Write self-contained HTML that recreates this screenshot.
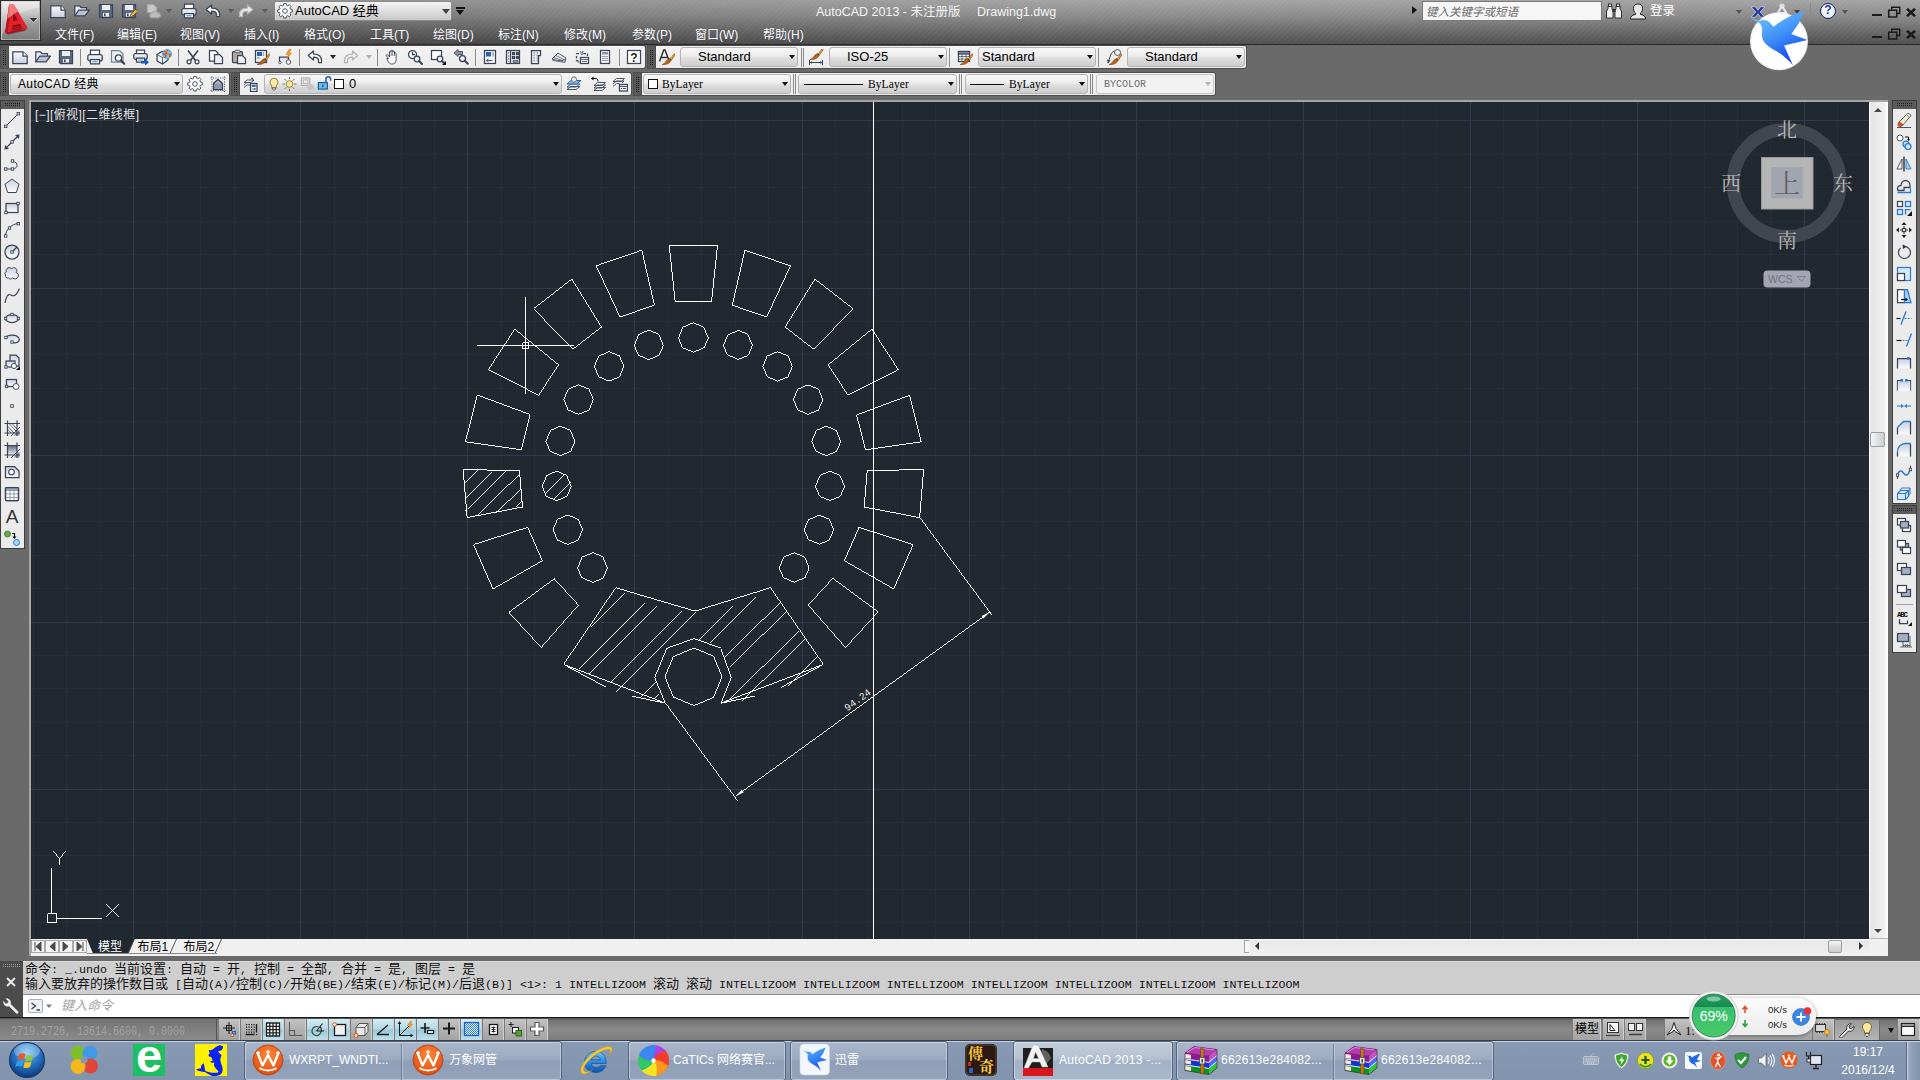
<!DOCTYPE html>
<html lang="zh-CN"><head><meta charset="utf-8"><title>AutoCAD 2013 - Drawing1.dwg</title>
<style>
*{box-sizing:border-box;margin:0;padding:0}
html,body{width:1920px;height:1080px;overflow:hidden}
body{background:#6a6a6a;font-family:"Liberation Sans","Noto Sans CJK SC",sans-serif;font-size:12px;color:#000;position:relative}
.abs{position:absolute}
svg{display:block}
#top{position:absolute;left:0;top:0;width:1920px;height:45px;background:linear-gradient(#a4a4a4 0,#8c8c8c 35%,#6a6a6a 70%,#505050 97%,#2a2a2a 98%,#2a2a2a 100%)}
#top:before{content:"";position:absolute;inset:0 0 1px 0;background:linear-gradient(90deg,rgba(0,0,0,.14) 0,rgba(0,0,0,.1) 25%,rgba(0,0,0,0) 55%),repeating-linear-gradient(135deg,rgba(255,255,255,.028) 0 1.5px,rgba(0,0,0,0) 1.5px 4px)}
.menu{position:absolute;top:27px;height:16px;line-height:16px;font-size:12px;color:#fff;white-space:nowrap;text-shadow:0 0 1px rgba(40,40,80,.6)}
.tbar{position:absolute;background:linear-gradient(#f3f3f3,#ebebeb);border-radius:0 2px 2px 0;box-shadow:0 0 0 1px #4e4e4e}
.grip{position:absolute;background:#565656}
.dd{position:absolute;height:20px;border:1px solid #b4b4b4;border-radius:3px;background:linear-gradient(#f8f8f8 0,#ececec 45%,#dedede 55%,#cecece 100%);font-size:13px;line-height:18px;white-space:nowrap;overflow:hidden}
.dd .arr{position:absolute;right:2px;top:7px;width:0;height:0;border:3.5px solid transparent;border-top:4.5px solid #111;border-bottom:0}
.sep{position:absolute;width:1px;background:#8a8a8a}
</style></head><body>
<div id="top">
<div class="abs" style="left:0;top:0;width:41px;height:41px;background:#2a2a2a"></div>
<div class="abs" style="left:1px;top:1px;width:39px;height:39px;border:1px solid #dcdcdc;border-bottom-color:#a8a8a8;border-right-color:#b4b4b4;border-left-color:#cfcfcf;background:linear-gradient(#e6e6e6 0,#c6c6c6 30%,#a0a0a0 55%,#7e7e7e 100%)"></div>
<svg class="abs" style="left:0;top:0" width="41" height="41" viewBox="0 0 41 41">
<defs><clipPath id="abc"><rect x="2" y="2" width="37" height="37"/></clipPath></defs>
<path d="M2 2h37v6C22 9 8 20 2 36z" fill="#fff" opacity=".28" clip-path="url(#abc)"/>
<path d="M6.500 33.500l2 1.300 16-3.800 3.500-2.300-3 .5-13 2.500z" fill="#30343c" opacity=".45"/>
<path d="M5.100 32.400l2.100 1.600 16.800-3.500 3.700-2.600-4.200 1.700-12 1.400z" fill="#a80c14"/>
<path d="M9.200 4h4.400l14.100 23.900-4.200 1.700-3-5.300-7.900 1-1.100 5.700-6.400 1.400z" fill="#e6202a"/>
<path d="M9.200 4L7.300 17.500 5.100 32.400l2.500-.5 2.600-17z" fill="#b8121a"/>
<path d="M12.800 10.500l5 9.800-4.800 1z" fill="#8e0c12"/>
<path d="M12.600 25.300l7.900-1 3 5.300-12 1.400z" fill="#b40e16"/><path d="M12.600 25.300l7.900-1 .5.900-8.500 1.100z" fill="#6a080e"/>
<path d="M9.200 4h4.400l4.300 7.300L7.300 19z" fill="#f8b0b0" opacity=".62"/>
<path d="M29.800 18.100h7.200l-3.600 4z" fill="#2c3440"/><path d="M29.800 18.100l3.600 4 3.600-4" fill="none" stroke="#e8e8e8" stroke-width=".7" opacity=".7" transform="translate(0 .8)"/>
</svg>
<svg class="abs" style="left:50px;top:3px" width="16" height="16" viewBox="0 0 16 16" stroke-width="1.25"><path d="M.8 2.800h10.200l4.200 4.200v7.500H.8z" fill="url(#lgp2)" stroke="#3a4456"/><path d="M11 2.800v4.200h4.200" fill="#fff" stroke="#3a4456"/></svg>
<svg class="abs" style="left:74px;top:3px" width="16" height="16" viewBox="0 0 16 16" stroke-width="1.25"><path d="M.8 12.800v-10h4.700l1.500 1.700h5.500v2.500" fill="#e9edf4" stroke="#3a4456"/><path d="M.8 12.800l4-5.800h10.700l-4.500 5.800z" fill="#b9c2d2" stroke="#3a4456"/></svg>
<svg class="abs" style="left:98px;top:3px" width="16" height="16" viewBox="0 0 16 16" stroke-width="1.25"><path d="M1.5 1.5h13v13h-12l-1-1z" fill="#5a6880" stroke="#3a4456"/><rect x="4" y="2" width="8" height="5" fill="#e9edf4"/><rect x="4.5" y="9.5" width="7" height="4.5" fill="#e9edf4" stroke="#3a4456" stroke-width=".6"/><rect x="6" y="10.5" width="1.6" height="2.6" fill="#3a4456"/></svg>
<svg class="abs" style="left:121px;top:3px" width="16" height="16" viewBox="0 0 16 16" stroke-width="1.25"><path d="M1.5 1.5h13v13h-12l-1-1z" fill="#5a6880" stroke="#3a4456"/><rect x="4" y="2" width="8" height="5" fill="#e9edf4"/><rect x="4.5" y="9.5" width="7" height="4.5" fill="#e9edf4" stroke="#3a4456" stroke-width=".6"/><rect x="6" y="10.5" width="1.6" height="2.6" fill="#3a4456"/><path d="M9 14l1-3 4.5-4.5 2 2L12 13z" fill="#f0b030" stroke="#6a4a10" stroke-width=".6"/><path d="M9 14l1-3 2 2z" fill="#fff" stroke="#333" stroke-width=".5"/></svg>
<svg class="abs" style="left:145px;top:3px" width="16" height="16" viewBox="0 0 16 16" stroke-width="1.25"><path d="M2.5 1.5h6l3 3v5h-9z" fill="#c9c9c9" stroke="#a8a8a8"/><path d="M6 14.5a2.5 2.5 0 0 1 1-4.5a3 3 0 0 1 5.5 0a2.3 2.3 0 0 1 1 4.5z" fill="#bdbdbd" stroke="#a5a5a5"/></svg>
<svg class="abs" style="left:181px;top:3px" width="16" height="16" viewBox="0 0 16 16" stroke-width="1.25"><path d="M3.500 6V1.200h9V6" fill="#fff" stroke="#3a4456"/><rect x=".8" y="5.500" width="14.400" height="6.500" rx="2" fill="url(#lgp2)" stroke="#3a4456"/><path d="M3.500 10.500h9v4.300h-9z" fill="#fff" stroke="#3a4456"/><path d="M5.500 12.700h5" stroke="#7fa6d6" stroke-width="1.600"/></svg>
<svg class="abs" style="left:205px;top:3px" width="16" height="16" viewBox="0 0 16 16" stroke-width="1.25"><path d="M1.200 6.500l5.300-4.500v3c5 0 8 2 8 6.500v2h-3v-2c0-2.500-2-3.500-5-3.500v3z" fill="#fff" stroke="#3a4456" stroke-linejoin="round"/></svg>
<svg class="abs" style="left:238px;top:3px" width="16" height="16" viewBox="0 0 16 16" stroke-width="1.25"><path d="M14.800 6.500l-5.300-4.500v3c-5 0-8 2-8 6.500v2h3v-2c0-2.500 2-3.500 5-3.500v3z" fill="#ececec" stroke="#b4b4b4" stroke-linejoin="round"/></svg>
<div class="abs" style="left:166px;top:9px;border:3px solid transparent;border-top:4px solid #5a5a5a;border-bottom:0"></div>
<div class="abs" style="left:228px;top:9px;border:3px solid transparent;border-top:4px solid #5a5a5a;border-bottom:0"></div>
<div class="abs" style="left:262px;top:9px;border:3px solid transparent;border-top:4px solid #5a5a5a;border-bottom:0"></div>
<div class="abs" style="left:274px;top:1px;width:178px;height:20px;border:1px solid #8a8a8a;border-radius:2px;background:linear-gradient(#f4f4f4,#dedede 50%,#c8c8c8);"></div>
<svg class="abs" style="left:277px;top:3px" width="16" height="16" viewBox="0 0 16 16" stroke-width="1.25"><g fill="#fff" stroke="#3a4456" stroke-width=".9"><path d="M6.800 1h2.400l.3 1.800 1.300.6 1.500-1.100 1.700 1.700-1.100 1.500.6 1.300 1.800.3v2.400l-1.800.3-.6 1.300 1.100 1.500-1.700 1.700-1.500-1.100-1.300.6-.3 1.800H6.800l-.3-1.800-1.300-.6-1.500 1.100L2 12.900l1.100-1.500-.6-1.300L.7 9.800V7.400l1.800-.3.6-1.300L2 4.300 3.700 2.600l1.500 1.100 1.300-.6z" transform="translate(0 -.600)"/><circle cx="8" cy="8" r="2.300"/></g></svg>
<div class="abs" style="left:295px;top:3px;font-size:13px;line-height:16px;color:#000;white-space:nowrap">AutoCAD 经典</div>
<div class="abs" style="left:442px;top:9px;border:4px solid transparent;border-top:5px solid #444;border-bottom:0"></div>
<div class="abs" style="left:456px;top:7px;width:9px;height:2px;background:#111"></div><div class="abs" style="left:456px;top:10px;border:4.500px solid transparent;border-top:5px solid #111;border-bottom:0"></div>
<div class="abs" style="left:816px;top:4px;font-size:12.500px;line-height:16px;color:#f4f4f4;white-space:pre">AutoCAD 2013 - 未注册版</div>
<div class="abs" style="left:977px;top:4px;font-size:12.500px;line-height:16px;color:#f4f4f4;white-space:pre">Drawing1.dwg</div>
<div class="abs" style="left:1412px;top:6px;border:4px solid transparent;border-left:5px solid #111;border-right:0"></div>
<div class="abs" style="left:1422px;top:1px;width:180px;height:20px;background:#f6f6f6;border:1px solid #7a7a7a;font-size:11.500px;line-height:20px;color:#6a6a6a;font-style:italic;padding-left:3px;white-space:nowrap">键入关键字或短语</div>
<svg class="abs" style="left:1605px;top:2px" width="18" height="18" viewBox="0 0 18 18"><g fill="#f0f0f0" stroke="#222" stroke-width=".9"><path d="M3 4h4v3l1 2v7H1.500V9l1.500-2zM11 4h4v3l1.500 2v7H10V9l1-2z"/><rect x="3.500" y="2" width="3" height="2.500"/><rect x="11.500" y="2" width="3" height="2.500"/></g><rect x="7.500" y="7" width="3" height="3" fill="#333"/></svg>
<svg class="abs" style="left:1629px;top:2px" width="18" height="18" viewBox="0 0 18 18"><path d="M1.500 17c0-3 2-4 5-4.500v-1.500c-1.500-1-2-2.500-2-4.500 0-3 1.500-4.500 4.500-4.500s4.500 1.500 4.500 4.500c0 2-.5 3.500-2 4.500v1.500c3 .5 5 1.500 5 4.500z" fill="#e8e8e8" stroke="#222" stroke-width="1"/></svg>
<div class="abs" style="left:1650px;top:3px;font-size:12.500px;line-height:16px;color:#fff">登录</div>
<div class="abs" style="left:1736px;top:10px;border:3px solid transparent;border-top:4px solid #555;border-bottom:0"></div>
<svg class="abs" style="left:1749px;top:4.500px" width="18" height="14" viewBox="0 0 18 16"><path d="M1 2h5l3 4 3-4h5l-5.500 6 5.500 6h-5l-3-4-3 4H1l5.500-6z" fill="#2a3a9a" stroke="#d8dcf4" stroke-width=".8"/></svg>
<svg class="abs" style="left:1772px;top:3px" width="20" height="18" viewBox="0 0 20 18"><path d="M2 16l8-13 8 13M6 10h8" fill="none" stroke="#e8e8f4" stroke-width="2"/><circle cx="10" cy="3" r="2" fill="none" stroke="#e8e8f4" stroke-width="1.200"/></svg>
<div class="abs" style="left:1794px;top:10px;border:3px solid transparent;border-top:4px solid #444;border-bottom:0"></div>
<div class="abs" style="left:1810px;top:3px;width:1px;height:17px;background:#8a8a8a"></div>
<div class="abs" style="left:1820px;top:3px;width:16px;height:16px;border-radius:8px;background:radial-gradient(circle at 45% 35%,#ffffff,#dfe4f2);border:1.500px solid #18245e;color:#2038b4;font-weight:bold;font-size:12px;line-height:13px;text-align:center">?</div>
<div class="abs" style="left:1842px;top:10px;border:3px solid transparent;border-top:4px solid #555;border-bottom:0"></div>
<div class="abs" style="left:1872px;top:14px;width:10px;height:2px;background:#1a1a1a"></div><svg class="abs" style="left:1887px;top:6px" width="14" height="12" viewBox="0 0 14 12"><path d="M4.700 3.500v-2.300h8v6.300h-2.500" fill="none" stroke="#1a1a1a" stroke-width="1.500"/><rect x="1.700" y="4.200" width="8" height="6.800" fill="none" stroke="#1a1a1a" stroke-width="1.500"/></svg><svg class="abs" style="left:1906px;top:8px" width="10" height="9" viewBox="0 0 10 9"><path d="M1 .8l8 7.400M9 .8l-8 7.400" stroke="#1a1a1a" stroke-width="2.500"/></svg>
<div class="abs" style="left:1872px;top:36px;width:10px;height:2px;background:#1a1a1a"></div><svg class="abs" style="left:1887px;top:28px" width="14" height="12" viewBox="0 0 14 12"><path d="M4.700 3.500v-2.300h8v6.300h-2.500" fill="none" stroke="#1a1a1a" stroke-width="1.500"/><rect x="1.700" y="4.200" width="8" height="6.800" fill="none" stroke="#1a1a1a" stroke-width="1.500"/></svg><svg class="abs" style="left:1906px;top:30px" width="10" height="9" viewBox="0 0 10 9"><path d="M1 .8l8 7.400M9 .8l-8 7.400" stroke="#1a1a1a" stroke-width="2.500"/></svg>
<div class="menu" style="left:55px">文件(F)</div>
<div class="menu" style="left:117px">编辑(E)</div>
<div class="menu" style="left:180px">视图(V)</div>
<div class="menu" style="left:244px">插入(I)</div>
<div class="menu" style="left:304px">格式(O)</div>
<div class="menu" style="left:370px">工具(T)</div>
<div class="menu" style="left:433px">绘图(D)</div>
<div class="menu" style="left:498px">标注(N)</div>
<div class="menu" style="left:564px">修改(M)</div>
<div class="menu" style="left:632px">参数(P)</div>
<div class="menu" style="left:695px">窗口(W)</div>
<div class="menu" style="left:763px">帮助(H)</div>
</div>
<svg class="abs" style="left:1740px;top:0px;z-index:50" width="80" height="76" viewBox="1740 0 80 76">
<defs><linearGradient id="tb" x1=".2" y1="0" x2=".7" y2="1"><stop offset="0" stop-color="#6fc6ff"/><stop offset=".5" stop-color="#3e8ef8"/><stop offset="1" stop-color="#0a3cf4"/></linearGradient>
<radialGradient id="tw" cx=".5" cy=".5" r=".5"><stop offset=".93" stop-color="#fff"/><stop offset="1" stop-color="#e6e9ee"/></radialGradient></defs>
<circle cx="1779" cy="41.200" r="29" fill="url(#tw)"/>
<path d="M1750.400 18.200L1760.100 20.800C1763 19.500 1766 20 1768.500 21.500L1773.700 26.700C1782 20 1793 14 1804.200 11.100C1802 16 1800 20 1799 22.900L1791.400 34L1807.400 40.100L1784.100 45.500L1792.800 64.900C1788 60 1784 56 1778.900 52.800C1774 50 1771 48.500 1767.800 45.800C1765 43 1763 41 1762.600 38.900C1761.500 35 1762 32 1762.200 29.200C1762 27 1761 25 1760.100 23.600Z" fill="url(#tb)"/>
</svg><svg class="abs" style="left:1px;top:46px;background:#585858;box-shadow:0 0 0 1px #4e4e4e" width="8" height="22" shape-rendering="crispEdges"><rect x="2" y="4" width="1" height="1" fill="#1e1e1e"/><rect x="4" y="4" width="1" height="1" fill="#1e1e1e"/><rect x="2" y="6" width="1" height="1" fill="#1e1e1e"/><rect x="4" y="6" width="1" height="1" fill="#1e1e1e"/><rect x="2" y="8" width="1" height="1" fill="#1e1e1e"/><rect x="4" y="8" width="1" height="1" fill="#1e1e1e"/><rect x="2" y="10" width="1" height="1" fill="#1e1e1e"/><rect x="4" y="10" width="1" height="1" fill="#1e1e1e"/><rect x="2" y="12" width="1" height="1" fill="#1e1e1e"/><rect x="4" y="12" width="1" height="1" fill="#1e1e1e"/><rect x="2" y="14" width="1" height="1" fill="#1e1e1e"/><rect x="4" y="14" width="1" height="1" fill="#1e1e1e"/><rect x="2" y="16" width="1" height="1" fill="#1e1e1e"/><rect x="4" y="16" width="1" height="1" fill="#1e1e1e"/><rect x="2" y="18" width="1" height="1" fill="#1e1e1e"/><rect x="4" y="18" width="1" height="1" fill="#1e1e1e"/></svg>
<div class="tbar" style="left:9px;top:46px;width:636px;height:22px"></div>
<svg class="abs" style="left:12px;top:49px" width="16" height="16" viewBox="0 0 16 16" stroke-width="1.25"><path d="M.8 2.800h10.200l4.200 4.200v7.500H.8z" fill="url(#lgp2)" stroke="#3a4456"/><path d="M11 2.800v4.200h4.200" fill="#fff" stroke="#3a4456"/></svg>
<svg class="abs" style="left:35px;top:49px" width="16" height="16" viewBox="0 0 16 16" stroke-width="1.25"><path d="M.8 12.800v-10h4.700l1.500 1.700h5.500v2.500" fill="#e9edf4" stroke="#3a4456"/><path d="M.8 12.800l4-5.800h10.700l-4.500 5.800z" fill="#b9c2d2" stroke="#3a4456"/></svg>
<svg class="abs" style="left:58px;top:49px" width="16" height="16" viewBox="0 0 16 16" stroke-width="1.25"><path d="M1.5 1.5h13v13h-12l-1-1z" fill="#5a6880" stroke="#3a4456"/><rect x="4" y="2" width="8" height="5" fill="#e9edf4"/><rect x="4.5" y="9.5" width="7" height="4.5" fill="#e9edf4" stroke="#3a4456" stroke-width=".6"/><rect x="6" y="10.5" width="1.6" height="2.6" fill="#3a4456"/></svg>
<div class="sep" style="left:80px;top:49px;height:17px"></div>
<svg class="abs" style="left:87px;top:49px" width="16" height="16" viewBox="0 0 16 16" stroke-width="1.25"><path d="M3.500 6V1.200h9V6" fill="#fff" stroke="#3a4456"/><rect x=".8" y="5.500" width="14.400" height="6.500" rx="2" fill="url(#lgp2)" stroke="#3a4456"/><path d="M3.500 10.500h9v4.300h-9z" fill="#fff" stroke="#3a4456"/><path d="M5.500 12.700h5" stroke="#7fa6d6" stroke-width="1.600"/></svg>
<svg class="abs" style="left:110px;top:49px" width="16" height="16" viewBox="0 0 16 16" stroke-width="1.25"><path d="M1.500 1.500h8l3.500 3.500v8h-11.500z" fill="#e9edf4" stroke="#7a8396"/><circle cx="8.500" cy="9" r="3.200" fill="#eef5fb" stroke="#3a4456"/><path d="M11 11.500l3.200 3.200" stroke="#3a4456" stroke-width="2.200" stroke-linecap="round"/></svg>
<svg class="abs" style="left:133px;top:49px" width="16" height="16" viewBox="0 0 16 16" stroke-width="1.25"><path d="M3.500 5V1.200h8V5" fill="#fff" stroke="#3a4456"/><rect x=".8" y="4.500" width="13.400" height="6" rx="2" fill="url(#lgp2)" stroke="#3a4456"/><path d="M3.500 9h8v4h-8z" fill="#fff" stroke="#3a4456"/><path d="M5 11h5" stroke="#8aa0c0" stroke-width="1.200"/><path d="M8 12h4v-2.200l4 3.400-4 3.400V14.400H8z" fill="#1458c0" stroke="none"/></svg>
<svg class="abs" style="left:156px;top:49px" width="16" height="16" viewBox="0 0 16 16" stroke-width="1.25"><path d="M1 5.500l5-3 6 2v6.500l-5.500 4-5.500-3z" fill="#eef0f4" stroke="#3a4456"/><path d="M6.500 8.500v6.500M1 5.500l5.500 3 5.500-4" fill="none" stroke="#3a4456" stroke-width=".8"/><circle cx="11" cy="5" r="4.600" fill="#5cc4f4" stroke="#2a98e0" stroke-width=".6"/><path d="M7.500 2.500c2.500 0 5.500 2.500 6.500 5.500M9.500 9c-.5-3 1-6.500 2.500-8M6.800 5.500c2.500-1 6-1 8.500.5" fill="none" stroke="#e8402a" stroke-width="1.100"/><path d="M10 1.500c2 1.500 3 4.500 2 7.500" fill="none" stroke="#f4c020" stroke-width="1"/></svg>
<div class="sep" style="left:178px;top:49px;height:17px"></div>
<svg class="abs" style="left:185px;top:49px" width="16" height="16" viewBox="0 0 16 16" stroke-width="1.25"><path d="M3 1.5l7.500 10M13 1.500l-7.500 10" stroke="#3a4456" stroke-width="1.600" fill="none"/><circle cx="4" cy="12.800" r="2" fill="#fff" stroke="#3a4456" stroke-width="1.200"/><circle cx="12" cy="12.800" r="2" fill="#fff" stroke="#3a4456" stroke-width="1.200"/></svg>
<svg class="abs" style="left:208px;top:49px" width="16" height="16" viewBox="0 0 16 16" stroke-width="1.25"><path d="M1.500 1.500h6l2.500 2.500v8h-8.500z" fill="#fff" stroke="#3a4456"/><path d="M6.500 5.500h5l3 3v6h-8z" fill="#e9edf4" stroke="#3a4456"/></svg>
<svg class="abs" style="left:231px;top:49px" width="16" height="16" viewBox="0 0 16 16" stroke-width="1.25"><rect x="1.500" y="2.500" width="10" height="11" rx="1" fill="#b8ad9c" stroke="#3a4456"/><rect x="4" y="1.200" width="5" height="2.600" rx=".8" fill="#d8d8d8" stroke="#3a4456" stroke-width=".8"/><path d="M6.500 6.500h5l3 3v5h-8z" fill="#e9edf4" stroke="#3a4456"/></svg>
<svg class="abs" style="left:254px;top:49px" width="16" height="16" viewBox="0 0 16 16" stroke-width="1.25"><rect x="1.500" y="1.500" width="11" height="12" fill="#f4f6fa" stroke="#3a4456"/><rect x="3" y="3" width="5" height="4" fill="#2a62b0" stroke="none"/><path d="M9.500 3v4M3 9h3" stroke="#98a4b8" stroke-width="1.400"/><path d="M3 15.600C5 15.800 8 15.600 10 14C11.500 12.800 12.300 11.800 11.800 10.800L10.400 9.800C9 9.800 8 10.800 7.300 12C6.300 13.600 4.500 15 3 15.600Z" fill="#b4641c" stroke="#6e3206" stroke-width=".5"/><path d="M11 10.300L15 4.800L16.200 5.700L12.300 11.300Z" fill="#f2a62c" stroke="#8a3a08" stroke-width=".6"/><path d="M10.400 9.800l1.400 1" stroke="#5a2804" stroke-width="1"/></svg>
<svg class="abs" style="left:277px;top:49px" width="16" height="16" viewBox="0 0 16 16" stroke-width="1.25"><path d="M2.500 13v-5h9v5" fill="#e9edf4" stroke="#3a4456"/><circle cx="3" cy="13.500" r="1.300" fill="#fff" stroke="#3a4456" stroke-width=".8"/><circle cx="11.500" cy="13" r="2.300" fill="#f4f4f4" stroke="#3a4456" stroke-width=".8"/><path d="M12 .5l-3 5h2.500l-1.500 4 4.500-5.500h-2.500l2-3.500z" fill="#f8a020" stroke="#d06000" stroke-width=".5"/></svg>
<div class="sep" style="left:299px;top:49px;height:17px"></div>
<svg class="abs" style="left:307px;top:49px" width="16" height="16" viewBox="0 0 16 16" stroke-width="1.25"><path d="M1.200 6.500l5.300-4.500v3c5 0 8 2 8 6.500v2h-3v-2c0-2.500-2-3.500-5-3.500v3z" fill="#fff" stroke="#3a4456" stroke-linejoin="round"/></svg>
<div class="abs" style="left:330px;top:55px;border:3px solid transparent;border-top:4px solid #222;border-bottom:0"></div>
<svg class="abs" style="left:343px;top:49px" width="16" height="16" viewBox="0 0 16 16" stroke-width="1.25"><path d="M14.800 6.500l-5.300-4.500v3c-5 0-8 2-8 6.500v2h3v-2c0-2.500 2-3.500 5-3.500v3z" fill="#ececec" stroke="#b4b4b4" stroke-linejoin="round"/></svg>
<div class="abs" style="left:366px;top:55px;border:3px solid transparent;border-top:4px solid #b0b0b0;border-bottom:0"></div>
<div class="sep" style="left:377px;top:49px;height:17px"></div>
<svg class="abs" style="left:384px;top:49px" width="16" height="16" viewBox="0 0 16 16" stroke-width="1.25"><path d="M4.500 9.500l-2-2.500c-.8-1 .5-2 1.300-1l1.700 2v-5c0-1.200 1.600-1.200 1.600 0v-1c0-1.200 1.700-1.200 1.700 0v1c0-1.200 1.700-1.200 1.700 0v1.500c0-1.100 1.600-1.100 1.600 0v6c0 3-1.500 4.500-4 4.500s-3.500-1-5.200-5.500z" fill="#fff" stroke="#3a4456" stroke-width=".9" stroke-linejoin="round"/><path d="M7.100 3v4M8.800 2.500v4.500M10.500 3.500v3.500" stroke="#3a4456" stroke-width=".7"/></svg>
<svg class="abs" style="left:407px;top:49px" width="16" height="16" viewBox="0 0 16 16" stroke-width="1.25"><circle cx="5.500" cy="5.500" r="4" fill="#f2f6fa" stroke="#3a4456"/><path d="M5.500 3v2.500h2.500" fill="none" stroke="#3a4456"/><circle cx="10" cy="10" r="2.800" fill="#e8f0f8" stroke="#3a4456"/><path d="M12 12l3 3" stroke="#3a4456" stroke-width="2" stroke-linecap="round"/></svg>
<svg class="abs" style="left:430px;top:49px" width="16" height="16" viewBox="0 0 16 16" stroke-width="1.25"><rect x="1.500" y="1.500" width="10" height="9" fill="#fff" stroke="#3a4456"/><circle cx="10" cy="10" r="2.800" fill="#e8f0f8" stroke="#3a4456"/><path d="M12 12l2.500 2.500" stroke="#3a4456" stroke-width="2" stroke-linecap="round"/><path d="M16 12v4h-4z" fill="#111"/></svg>
<svg class="abs" style="left:453px;top:49px" width="16" height="16" viewBox="0 0 16 16" stroke-width="1.25"><path d="M1 4l4-3.500v2h4.500v3H5v2z" fill="#8a94a8" stroke="#3a4456" stroke-width=".8"/><circle cx="9.500" cy="9.500" r="3" fill="#e8f0f8" stroke="#3a4456"/><path d="M11.800 11.800l3 3" stroke="#3a4456" stroke-width="2" stroke-linecap="round"/></svg>
<div class="sep" style="left:475px;top:49px;height:17px"></div>
<svg class="abs" style="left:482px;top:49px" width="16" height="16" viewBox="0 0 16 16" stroke-width="1.25"><rect x="2.500" y="1.500" width="11" height="13" fill="#f6f8fb" stroke="#3a4456"/><rect x="4" y="3" width="5" height="4.500" fill="#2a62b0"/><path d="M11 3v4.500" stroke="#98a4b8" stroke-width="1.500"/><path d="M4.500 11.500h6M4.500 11.500l2-1.500M4.500 11.500l2 1.500" stroke="#3a4456" stroke-width=".9" fill="none"/></svg>
<svg class="abs" style="left:505px;top:49px" width="16" height="16" viewBox="0 0 16 16" stroke-width="1.25"><rect x="1.500" y="1.500" width="13" height="13" fill="#f6f8fb" stroke="#3a4456"/><path d="M5.500 1.500v13" stroke="#3a4456"/><path d="M3.500 3.500v1M3.500 6.500v1M3.500 9.500v1M3.500 12.500v.500" stroke="#3a4456" stroke-width="1.200"/><rect x="7.500" y="3.500" width="2" height="2" fill="none" stroke="#3a4456"/><rect x="11.500" y="3.500" width="2" height="2" fill="none" stroke="#3a4456"/><rect x="7.500" y="7.500" width="2" height="2" fill="none" stroke="#3a4456"/><rect x="11.500" y="7.500" width="2" height="2" fill="none" stroke="#3a4456"/><rect x="8" y="11.500" width="5" height="2" fill="#8a94a8" stroke="#3a4456" stroke-width=".6"/></svg>
<svg class="abs" style="left:528px;top:49px" width="16" height="16" viewBox="0 0 16 16" stroke-width="1.25"><path d="M3.500 14.500v-13h9v5h-2v8z" fill="#f0f2f6" stroke="#3a4456"/><path d="M5.500 4h1.500M8.500 4h1.500M5.500 6.500h1.500M8.500 6.500h1.500M5.500 9h1.500M8.500 9h1.500M5.500 11.500h1.500M8.500 11.500h1.500" stroke="#8a94a8" stroke-width="1.600"/></svg>
<svg class="abs" style="left:551px;top:49px" width="16" height="16" viewBox="0 0 16 16" stroke-width="1.25"><path d="M1 10l6-6 8 5-1 2.500c-1-.8-2-.5-2.500.500l-9.500-1.500z" fill="#f0f2f6" stroke="#3a4456" stroke-width=".9"/><path d="M1.500 11.500l10 1.500M3 8.500l8.500 3M5 6.500l8 4" stroke="#3a4456" stroke-width=".7" fill="none"/><circle cx="13" cy="12" r="1.500" fill="#c8ccd4" stroke="#3a4456" stroke-width=".7"/></svg>
<svg class="abs" style="left:574px;top:49px" width="16" height="16" viewBox="0 0 16 16" stroke-width="1.25"><path d="M2.500 4.500h3M9.500 4.500h4v3M2.500 7v4.500h3M2.500 4.500v.8" stroke="#3a4456" fill="none" stroke-dasharray="2.500 1.500"/><path d="M6 2.500c1 0 1.500 1 1 1.500s0 1.500 1 1.500c1.500 0 1-1.500.500-2s0-1.500 1-1" fill="#dfe3ea" stroke="#3a4456" stroke-width=".8"/><rect x="6.500" y="8.500" width="8" height="6" fill="#fff" stroke="#3a4456"/><path d="M6.500 10.500h8M8 12.500h5" stroke="#3a4456" stroke-width=".8"/><rect x="3.500" y="12.500" width="2" height="1" fill="#3a4456"/></svg>
<svg class="abs" style="left:597px;top:49px" width="16" height="16" viewBox="0 0 16 16" stroke-width="1.25"><rect x="3.500" y="1.500" width="9" height="13" fill="#f6f8fb" stroke="#3a4456"/><rect x="5" y="3" width="6" height="2.500" fill="#8a94a8"/><path d="M5.500 7.500h1M7.500 7.500h1M9.500 7.500h1M5.500 9.500h1M7.500 9.500h1M9.500 9.500h1M5.500 11.500h1M7.500 11.500h1M9.500 11.500h1" stroke="#3a4456" stroke-width="1.200"/></svg>
<div class="sep" style="left:619px;top:49px;height:17px"></div>
<svg class="abs" style="left:626px;top:49px" width="16" height="16" viewBox="0 0 16 16" stroke-width="1.25"><rect x="1.500" y="1.500" width="13" height="13" fill="#fff" stroke="#3a4456"/><text x="8" y="12.500" text-anchor="middle" font-family="Liberation Sans,sans-serif" font-weight="bold" font-size="12" fill="#222">?</text></svg>
<svg class="abs" style="left:648px;top:46px;background:#585858;box-shadow:0 0 0 1px #4e4e4e" width="8" height="22" shape-rendering="crispEdges"><rect x="2" y="4" width="1" height="1" fill="#1e1e1e"/><rect x="4" y="4" width="1" height="1" fill="#1e1e1e"/><rect x="2" y="6" width="1" height="1" fill="#1e1e1e"/><rect x="4" y="6" width="1" height="1" fill="#1e1e1e"/><rect x="2" y="8" width="1" height="1" fill="#1e1e1e"/><rect x="4" y="8" width="1" height="1" fill="#1e1e1e"/><rect x="2" y="10" width="1" height="1" fill="#1e1e1e"/><rect x="4" y="10" width="1" height="1" fill="#1e1e1e"/><rect x="2" y="12" width="1" height="1" fill="#1e1e1e"/><rect x="4" y="12" width="1" height="1" fill="#1e1e1e"/><rect x="2" y="14" width="1" height="1" fill="#1e1e1e"/><rect x="4" y="14" width="1" height="1" fill="#1e1e1e"/><rect x="2" y="16" width="1" height="1" fill="#1e1e1e"/><rect x="4" y="16" width="1" height="1" fill="#1e1e1e"/><rect x="2" y="18" width="1" height="1" fill="#1e1e1e"/><rect x="4" y="18" width="1" height="1" fill="#1e1e1e"/></svg>
<div class="tbar" style="left:656px;top:46px;width:590px;height:22px"></div>
<svg class="abs" style="left:659px;top:49px" width="16" height="16" viewBox="0 0 16 16" stroke-width="1.25"><path d="M.5 12.500l4.200-11.500h1.300l4.500 11.500M2.200 8.500h6.500" fill="none" stroke="#333" stroke-width="1.500"/><path d="M3 15.600C5 15.800 8 15.600 10 14C11.500 12.800 12.300 11.800 11.800 10.800L10.400 9.800C9 9.800 8 10.800 7.300 12C6.300 13.600 4.500 15 3 15.600Z" fill="#b4641c" stroke="#6e3206" stroke-width=".5"/><path d="M11 10.300L15 4.800L16.200 5.700L12.300 11.300Z" fill="#f2a62c" stroke="#8a3a08" stroke-width=".6"/><path d="M10.400 9.800l1.400 1" stroke="#5a2804" stroke-width="1"/></svg>
<div class="dd" style="left:680px;top:47px;width:118px;height:20px;"><span style="position:absolute;left:17px">Standard</span><i class="arr"></i></div>
<div class="sep" style="left:801px;top:48px;height:19px"></div><div class="sep" style="left:803px;top:48px;height:19px"></div>
<svg class="abs" style="left:808px;top:49px" width="16" height="16" viewBox="0 0 16 16" stroke-width="1.25"><path d="M1.500 11v5M14.500 11v5M1.500 13.500h13" stroke="#3a4456" stroke-width="1" fill="none"/><path d="M1.500 13.500l2.500-1.200v2.400zM14.500 13.500l-2.500-1.200v2.400z" fill="#3a4456"/><g transform="translate(-1 -5)"><path d="M3 15.600C5 15.800 8 15.600 10 14C11.500 12.800 12.300 11.800 11.800 10.800L10.400 9.800C9 9.800 8 10.800 7.300 12C6.300 13.600 4.500 15 3 15.600Z" fill="#b4641c" stroke="#6e3206" stroke-width=".5"/><path d="M11 10.300L15 4.800L16.200 5.700L12.300 11.300Z" fill="#f2a62c" stroke="#8a3a08" stroke-width=".6"/><path d="M10.400 9.800l1.400 1" stroke="#5a2804" stroke-width="1"/></g></svg>
<div class="dd" style="left:829px;top:47px;width:118px;height:20px;"><span style="position:absolute;left:17px">ISO-25</span><i class="arr"></i></div>
<div class="sep" style="left:949px;top:48px;height:19px"></div>
<svg class="abs" style="left:957px;top:49px" width="16" height="16" viewBox="0 0 16 16" stroke-width="1.25"><rect x="1.500" y="2.500" width="11" height="10" fill="#fff" stroke="#3a4456"/><rect x="1.500" y="2.500" width="11" height="2.500" fill="#8a94a8" stroke="#3a4456"/><path d="M1.500 7.500h11M1.500 10h11M5 5v7.500M9 5v7.500" stroke="#3a4456" stroke-width=".7"/><path d="M3 15.600C5 15.800 8 15.600 10 14C11.500 12.800 12.300 11.800 11.800 10.800L10.400 9.800C9 9.800 8 10.800 7.300 12C6.300 13.600 4.500 15 3 15.600Z" fill="#b4641c" stroke="#6e3206" stroke-width=".5"/><path d="M11 10.300L15 4.800L16.200 5.700L12.300 11.300Z" fill="#f2a62c" stroke="#8a3a08" stroke-width=".6"/><path d="M10.400 9.800l1.400 1" stroke="#5a2804" stroke-width="1"/></svg>
<div class="dd" style="left:978px;top:47px;width:118px;height:20px;"><span style="position:absolute;left:3px">Standard</span><i class="arr"></i></div>
<div class="sep" style="left:1098px;top:48px;height:19px"></div>
<svg class="abs" style="left:1106px;top:49px" width="16" height="16" viewBox="0 0 16 16" stroke-width="1.25"><path d="M2 14l3-9c1-2 3-3 5-3" fill="none" stroke="#3a4456" stroke-width="1"/><path d="M1 10.500l1 4 2.500-3z" fill="#3a4456"/><circle cx="11.500" cy="3.500" r="3" fill="#f4f4f4" stroke="#3a4456" stroke-width=".9"/><path d="M3 15.600C5 15.800 8 15.600 10 14C11.500 12.800 12.300 11.800 11.800 10.800L10.400 9.800C9 9.800 8 10.800 7.300 12C6.300 13.600 4.500 15 3 15.600Z" fill="#b4641c" stroke="#6e3206" stroke-width=".5"/><path d="M11 10.300L15 4.800L16.200 5.700L12.300 11.300Z" fill="#f2a62c" stroke="#8a3a08" stroke-width=".6"/><path d="M10.400 9.800l1.400 1" stroke="#5a2804" stroke-width="1"/></svg>
<div class="dd" style="left:1127px;top:47px;width:118px;height:20px;"><span style="position:absolute;left:17px">Standard</span><i class="arr"></i></div>
<svg class="abs" style="left:1px;top:73px;background:#585858;box-shadow:0 0 0 1px #4e4e4e" width="8" height="22" shape-rendering="crispEdges"><rect x="2" y="4" width="1" height="1" fill="#1e1e1e"/><rect x="4" y="4" width="1" height="1" fill="#1e1e1e"/><rect x="2" y="6" width="1" height="1" fill="#1e1e1e"/><rect x="4" y="6" width="1" height="1" fill="#1e1e1e"/><rect x="2" y="8" width="1" height="1" fill="#1e1e1e"/><rect x="4" y="8" width="1" height="1" fill="#1e1e1e"/><rect x="2" y="10" width="1" height="1" fill="#1e1e1e"/><rect x="4" y="10" width="1" height="1" fill="#1e1e1e"/><rect x="2" y="12" width="1" height="1" fill="#1e1e1e"/><rect x="4" y="12" width="1" height="1" fill="#1e1e1e"/><rect x="2" y="14" width="1" height="1" fill="#1e1e1e"/><rect x="4" y="14" width="1" height="1" fill="#1e1e1e"/><rect x="2" y="16" width="1" height="1" fill="#1e1e1e"/><rect x="4" y="16" width="1" height="1" fill="#1e1e1e"/><rect x="2" y="18" width="1" height="1" fill="#1e1e1e"/><rect x="4" y="18" width="1" height="1" fill="#1e1e1e"/></svg>
<div class="tbar" style="left:9px;top:73px;width:220px;height:22px"></div>
<div class="dd" style="left:10px;top:74px;width:173px;height:20px;"><span style="position:absolute;left:7px;font-size:12px;letter-spacing:.35px">AutoCAD 经典</span><i class="arr"></i></div>
<svg class="abs" style="left:187px;top:76px" width="16" height="16" viewBox="0 0 16 16" stroke-width="1.25"><g fill="#fff" stroke="#3a4456" stroke-width=".9"><path d="M6.800 1h2.400l.3 1.800 1.300.6 1.500-1.100 1.700 1.700-1.100 1.500.6 1.300 1.800.3v2.400l-1.800.3-.6 1.300 1.100 1.500-1.700 1.700-1.500-1.100-1.300.6-.3 1.800H6.800l-.3-1.800-1.300-.6-1.500 1.100L2 12.900l1.100-1.500-.6-1.300L.7 9.800V7.400l1.800-.3.6-1.300L2 4.300 3.700 2.600l1.500 1.100 1.300-.6z" transform="translate(0 -.600)"/><circle cx="8" cy="8" r="2.300"/></g></svg>
<svg class="abs" style="left:210px;top:76px" width="16" height="16" viewBox="0 0 16 16" stroke-width="1.25"><path d="M.5 2h15M.5 14.500h15M2 .5v15.500M14.500 .5v15.500" fill="none" stroke="#5a6a88" stroke-width="1" stroke-dasharray="1.200 1.200"/><path d="M3.500 13.500V7.500L8 3.500l4.500 4v6z" fill="#8e98ac" stroke="#3a4456"/><path d="M3.500 7.500L8 3.500l4.500 4" fill="#b4bccb" stroke="#3a4456"/></svg>
<svg class="abs" style="left:232px;top:73px;background:#585858;box-shadow:0 0 0 1px #4e4e4e" width="8" height="22" shape-rendering="crispEdges"><rect x="2" y="4" width="1" height="1" fill="#1e1e1e"/><rect x="4" y="4" width="1" height="1" fill="#1e1e1e"/><rect x="2" y="6" width="1" height="1" fill="#1e1e1e"/><rect x="4" y="6" width="1" height="1" fill="#1e1e1e"/><rect x="2" y="8" width="1" height="1" fill="#1e1e1e"/><rect x="4" y="8" width="1" height="1" fill="#1e1e1e"/><rect x="2" y="10" width="1" height="1" fill="#1e1e1e"/><rect x="4" y="10" width="1" height="1" fill="#1e1e1e"/><rect x="2" y="12" width="1" height="1" fill="#1e1e1e"/><rect x="4" y="12" width="1" height="1" fill="#1e1e1e"/><rect x="2" y="14" width="1" height="1" fill="#1e1e1e"/><rect x="4" y="14" width="1" height="1" fill="#1e1e1e"/><rect x="2" y="16" width="1" height="1" fill="#1e1e1e"/><rect x="4" y="16" width="1" height="1" fill="#1e1e1e"/><rect x="2" y="18" width="1" height="1" fill="#1e1e1e"/><rect x="4" y="18" width="1" height="1" fill="#1e1e1e"/></svg>
<div class="tbar" style="left:240px;top:73px;width:391px;height:22px"></div>
<svg class="abs" style="left:243px;top:76px" width="16" height="16" viewBox="0 0 16 16" stroke-width="1.25"><path d="M1 6.500l3-2.500h7l-3 2.500zM1 9l3-2.500h3M1 11.500l3-2.500h3" fill="#f4f6fa" stroke="#3a4456" stroke-width=".9"/><path d="M8 3.500l1.500-1.500M9.500 2l.3 1.600M9.500 2l-1.600.2" stroke="#3a4456" stroke-width=".8" fill="none"/><rect x="7.500" y="7.500" width="6.500" height="8" fill="#f4f6fa" stroke="#3a4456"/><rect x="8.800" y="8.800" width="4" height="2" fill="#2a62b0"/><path d="M9 13h3.500M11.500 12l1 1-1 1" stroke="#3a4456" stroke-width=".8" fill="none"/></svg>
<div class="dd" style="left:264px;top:74px;width:298px;height:20px;"><span style="position:absolute;left:84px;font-size:13px">0</span><i class="arr"></i></div>
<svg class="abs" style="left:267px;top:76px" width="14" height="16" viewBox="0 0 16 16" stroke-width="1.25"><path d="M8 1.500c-3 0-4.500 2-4.500 4.500 0 2 1.500 3 2 4.500v2h5v-2c.5-1.500 2-2.500 2-4.500 0-2.500-1.500-4.500-4.500-4.500z" fill="#fbe9a0" stroke="#6a5a28" stroke-width=".9"/><path d="M6 12.500h4v1.500l-1 1h-2l-1-1z" fill="#d8d8d8" stroke="#3a4456" stroke-width=".8"/></svg>
<svg class="abs" style="left:282px;top:76px" width="15" height="16" viewBox="0 0 16 16" stroke-width="1.25"><circle cx="8" cy="8" r="3.600" fill="#fbe39a" stroke="#8a7a38" stroke-width=".9"/><path d="M8 .5v2.500M8 13v2.500M.5 8h2.500M13 8h2.500M2.700 2.700l1.800 1.800M11.500 11.500l1.800 1.800M2.700 13.300l1.800-1.800M11.500 4.500l1.800-1.800" stroke="#5a5a48" stroke-width=".9"/></svg>
<svg class="abs" style="left:300px;top:76px" width="15" height="16" viewBox="0 0 16 16" stroke-width="1.25"><rect x="1.500" y="1.500" width="9" height="8" fill="#ededed" stroke="#b0b0b0"/><rect x="3.500" y="3.500" width="5" height="4" fill="none" stroke="#b8b8b8"/><circle cx="11" cy="11" r="3" fill="#c4c4c4"/><path d="M11 6.500v9M6.500 11h9M7.800 7.800l6.400 6.400M7.800 14.200l6.400-6.400" stroke="#c4c4c4" stroke-width="1"/></svg>
<svg class="abs" style="left:317px;top:75px" width="15" height="16" viewBox="0 0 16 16" stroke-width="1.25"><path d="M9.500 7.500v-3.500c0-3.500 5-3.500 5 0v1.500" fill="none" stroke="#2a62a8" stroke-width="1.600"/><rect x="1.500" y="7.500" width="9.500" height="7" fill="#6cc0ec" stroke="#1a5a98"/><path d="M6.200 9.500v3" stroke="#1a4a88" stroke-width="1.400"/></svg>
<div class="abs" style="left:334px;top:79px;width:10px;height:10px;background:#fff;border:1px solid #111"></div>
<svg class="abs" style="left:566px;top:76px" width="16" height="16" viewBox="0 0 16 16" stroke-width="1.25"><path d="M1 13.500l4-3h9l-4 3zM1 11l4-3h9l-4 3z" fill="#f4f6fa" stroke="#3a4456" stroke-width=".9"/><path d="M1 8l4-3.500h10l-4.500 3.500z" fill="#86c0ec" stroke="#1a62b8" stroke-width="1"/><circle cx="8" cy="3.500" r="2.600" fill="#e8e8e8" stroke="#6a6a6a" stroke-width=".9"/></svg>
<svg class="abs" style="left:590px;top:76px" width="16" height="16" viewBox="0 0 16 16" stroke-width="1.25"><path d="M4 14.500l3.500-3h8l-3.500 3zM4 12l3.500-3h8l-3.500 3zM4 9.500l3.500-3h8l-3.500 3z" fill="#f4f6fa" stroke="#3a4456" stroke-width=".9"/><path d="M1 2.500h4c2 0 3 1 3 3" fill="none" stroke="#111" stroke-width="1"/><path d="M3.500 0.500l-2.500 2 2.500 2z" fill="#111"/></svg>
<svg class="abs" style="left:612px;top:76px" width="16" height="16" viewBox="0 0 16 16" stroke-width="1.25"><path d="M1 10.500l3.500-3h3M1 8l3.500-3h7.500l-2 2M1 5.500l3.500-3h8l-3 3z" fill="#f4f6fa" stroke="#3a4456" stroke-width=".9"/><rect x="7.500" y="8.500" width="8" height="6.500" fill="#f4f6fa" stroke="#3a4456"/><path d="M7.500 10.500h8M9 12.500h1M11 12.500h3" stroke="#3a4456" stroke-width=".9"/></svg>
<svg class="abs" style="left:634px;top:73px;background:#585858;box-shadow:0 0 0 1px #4e4e4e" width="8" height="22" shape-rendering="crispEdges"><rect x="2" y="4" width="1" height="1" fill="#1e1e1e"/><rect x="4" y="4" width="1" height="1" fill="#1e1e1e"/><rect x="2" y="6" width="1" height="1" fill="#1e1e1e"/><rect x="4" y="6" width="1" height="1" fill="#1e1e1e"/><rect x="2" y="8" width="1" height="1" fill="#1e1e1e"/><rect x="4" y="8" width="1" height="1" fill="#1e1e1e"/><rect x="2" y="10" width="1" height="1" fill="#1e1e1e"/><rect x="4" y="10" width="1" height="1" fill="#1e1e1e"/><rect x="2" y="12" width="1" height="1" fill="#1e1e1e"/><rect x="4" y="12" width="1" height="1" fill="#1e1e1e"/><rect x="2" y="14" width="1" height="1" fill="#1e1e1e"/><rect x="4" y="14" width="1" height="1" fill="#1e1e1e"/><rect x="2" y="16" width="1" height="1" fill="#1e1e1e"/><rect x="4" y="16" width="1" height="1" fill="#1e1e1e"/><rect x="2" y="18" width="1" height="1" fill="#1e1e1e"/><rect x="4" y="18" width="1" height="1" fill="#1e1e1e"/></svg>
<div class="tbar" style="left:642px;top:73px;width:573px;height:22px"></div>
<div class="dd" style="left:643px;top:74px;width:148px;height:20px;"><span style="position:absolute;left:4px;top:4px;width:10px;height:10px;border:1px solid #111;background:#fff"></span><span style="position:absolute;left:18px;font-family:'Liberation Serif','Noto Serif CJK SC',serif;font-size:11.5px;letter-spacing:.1px">ByLayer</span><i class="arr"></i></div>
<div class="sep" style="left:793px;top:74px;height:20px"></div><div class="sep" style="left:795px;top:74px;height:20px"></div>
<div class="dd" style="left:798px;top:74px;width:159px;height:20px;"><span style="position:absolute;left:5px;top:9px;width:59px;height:1px;background:#111"></span><span style="position:absolute;left:69px;font-family:'Liberation Serif','Noto Serif CJK SC',serif;font-size:11.5px;letter-spacing:.1px">ByLayer</span><i class="arr"></i></div>
<div class="sep" style="left:959px;top:74px;height:20px"></div><div class="sep" style="left:961px;top:74px;height:20px"></div>
<div class="dd" style="left:965px;top:74px;width:123px;height:20px;"><span style="position:absolute;left:4px;top:9px;width:34px;height:1px;background:#111"></span><span style="position:absolute;left:43px;font-family:'Liberation Serif','Noto Serif CJK SC',serif;font-size:11.5px;letter-spacing:.1px">ByLayer</span><i class="arr"></i></div>
<div class="sep" style="left:1090px;top:74px;height:20px"></div><div class="sep" style="left:1092px;top:74px;height:20px"></div>
<div class="dd" style="left:1096px;top:74px;width:118px;height:20px;background:#f2f2f2;border-color:#c4c4c4"><span style="position:absolute;left:7px;font-family:Liberation Mono,monospace;font-size:10px;color:#6e6e6e;top:1px;transform:scaleY(1.15)">BYCOLOR</span><i class="arr" style="border-top-color:#b0b0b0"></i></div><svg width="0" height="0" style="position:absolute"><defs><linearGradient id="lgp" x1="0" y1="0" x2="0" y2="1"><stop offset="0" stop-color="#c8d0de"/><stop offset="1" stop-color="#fbfcfe"/></linearGradient><linearGradient id="lgp2" x1="0" y1="0" x2="0" y2="1"><stop offset="0" stop-color="#fdfdfe"/><stop offset="1" stop-color="#c6cedc"/></linearGradient></defs></svg>
<div class="abs" style="left:0px;top:100px;width:25px;height:449px;background:#3e3e3e"></div><div class="abs" style="left:1px;top:101px;width:23px;height:447px;background:#ebebeb"></div><svg class="abs" style="left:1px;top:101px;background:#5a5a5a" width="23" height="8" shape-rendering="crispEdges"><rect x="4" y="2" width="1" height="1" fill="#1e1e1e"/><rect x="4" y="4" width="1" height="1" fill="#1e1e1e"/><rect x="6" y="2" width="1" height="1" fill="#1e1e1e"/><rect x="6" y="4" width="1" height="1" fill="#1e1e1e"/><rect x="8" y="2" width="1" height="1" fill="#1e1e1e"/><rect x="8" y="4" width="1" height="1" fill="#1e1e1e"/><rect x="10" y="2" width="1" height="1" fill="#1e1e1e"/><rect x="10" y="4" width="1" height="1" fill="#1e1e1e"/><rect x="12" y="2" width="1" height="1" fill="#1e1e1e"/><rect x="12" y="4" width="1" height="1" fill="#1e1e1e"/><rect x="14" y="2" width="1" height="1" fill="#1e1e1e"/><rect x="14" y="4" width="1" height="1" fill="#1e1e1e"/><rect x="16" y="2" width="1" height="1" fill="#1e1e1e"/><rect x="16" y="4" width="1" height="1" fill="#1e1e1e"/><rect x="18" y="2" width="1" height="1" fill="#1e1e1e"/><rect x="18" y="4" width="1" height="1" fill="#1e1e1e"/></svg><svg class="abs" style="left:4px;top:112px" width="16" height="16" viewBox="0 0 16 16" stroke-width="1.25"><path d="M1.500 14.500l13-13" stroke="#3a4456" stroke-width="1"/><rect x="0.5" y="13.100000000000001" width="2.4" height="2.4" fill="#fff" stroke="#3a4456" stroke-width=".9"/><rect x="13.100000000000001" y="0.5" width="2.4" height="2.4" fill="#fff" stroke="#3a4456" stroke-width=".9"/></svg><svg class="abs" style="left:4px;top:134px" width="16" height="16" viewBox="0 0 16 16" stroke-width="1.25"><path d="M2 14l12-12" stroke="#3a4456" stroke-width="1.100"/><path d="M15.500 .5l-4.500 .5 4 4zM.5 15.500l4.500-.5-4-4z" fill="#3a4456"/><rect x="6.8" y="6.8" width="2.4" height="2.4" fill="#fff" stroke="#3a4456" stroke-width=".9"/></svg><svg class="abs" style="left:4px;top:156px" width="16" height="16" viewBox="0 0 16 16" stroke-width="1.25"><path d="M1.500 13h7c6 0 6-7.500 0-7.500" fill="none" stroke="#3a4456" stroke-width="1"/><rect x="0.5" y="11.8" width="2.4" height="2.4" fill="#fff" stroke="#3a4456" stroke-width=".9"/><rect x="7.3" y="11.8" width="2.4" height="2.4" fill="#fff" stroke="#3a4456" stroke-width=".9"/><rect x="7.3" y="3.8" width="2.4" height="2.4" fill="#fff" stroke="#3a4456" stroke-width=".9"/></svg><svg class="abs" style="left:4px;top:178px" width="16" height="16" viewBox="0 0 16 16" stroke-width="1.25"><path d="M8 1l7 5.200-2.700 8.300h-8.600L1 6.200z" fill="url(#lgp)" stroke="#3a4456" stroke-width="1"/></svg><svg class="abs" style="left:4px;top:200px" width="16" height="16" viewBox="0 0 16 16" stroke-width="1.25"><rect x="2" y="3.500" width="12" height="9" fill="url(#lgp)" stroke="#3a4456"/><rect x="0.8" y="11.3" width="2.4" height="2.4" fill="#fff" stroke="#3a4456" stroke-width=".9"/><rect x="12.8" y="2.3" width="2.4" height="2.4" fill="#fff" stroke="#3a4456" stroke-width=".9"/></svg><svg class="abs" style="left:4px;top:222px" width="16" height="16" viewBox="0 0 16 16" stroke-width="1.25"><path d="M1.500 14.500c0-7 6-12.500 13-13" fill="none" stroke="#3a4456" stroke-width="1"/><rect x="0.5" y="12.8" width="2.4" height="2.4" fill="#fff" stroke="#3a4456" stroke-width=".9"/><rect x="4.3" y="4.8" width="2.4" height="2.4" fill="#fff" stroke="#3a4456" stroke-width=".9"/><rect x="13.100000000000001" y="0.5" width="2.4" height="2.4" fill="#fff" stroke="#3a4456" stroke-width=".9"/></svg><svg class="abs" style="left:4px;top:244px" width="16" height="16" viewBox="0 0 16 16" stroke-width="1.25"><circle cx="8" cy="8" r="7" fill="url(#lgp)" stroke="#3a4456"/><path d="M8 8l5-5" stroke="#3a4456"/><rect x="6.8" y="6.8" width="2.4" height="2.4" fill="#fff" stroke="#3a4456" stroke-width=".9"/></svg><svg class="abs" style="left:4px;top:266px" width="16" height="16" viewBox="0 0 16 16" stroke-width="1.25"><path d="M4 2c1.500-1 3 0 3.500 1 .8-1.500 3-2 4.500-.5s1 3 0 4c2 .5 3 2.500 2 4.500s-3.500 2.500-5.500 1c-.5 1-3 1.500-4 0-2 .5-3.500-1-3-3-1-1.500-.5-3 1-3.500-1-1.500 0-3 1.500-3.500z" fill="url(#lgp)" stroke="#3a4456" stroke-width="1"/></svg><svg class="abs" style="left:4px;top:288px" width="16" height="16" viewBox="0 0 16 16" stroke-width="1.25"><path d="M1 15c1-6 3-10 6-8s6 0 8.500-6.500" fill="none" stroke="#3a4456" stroke-width="1.200"/></svg><svg class="abs" style="left:4px;top:310px" width="16" height="16" viewBox="0 0 16 16" stroke-width="1.25"><ellipse cx="8" cy="8.500" rx="6.500" ry="4" fill="url(#lgp)" stroke="#3a4456"/><rect x="0.30000000000000004" y="7.3" width="2.4" height="2.4" fill="#fff" stroke="#3a4456" stroke-width=".9"/><rect x="13.3" y="7.3" width="2.4" height="2.4" fill="#fff" stroke="#3a4456" stroke-width=".9"/><rect x="6.8" y="3.3" width="2.4" height="2.4" fill="#fff" stroke="#3a4456" stroke-width=".9"/></svg><svg class="abs" style="left:4px;top:332px" width="16" height="16" viewBox="0 0 16 16" stroke-width="1.25"><path d="M2 5.500c2-3 10-3.500 12.500 0s-2 7-7 4.500" fill="url(#lgp)" stroke="#3a4456"/><rect x="0.8" y="4.3" width="2.4" height="2.4" fill="#fff" stroke="#3a4456" stroke-width=".9"/><rect x="6.8" y="8.8" width="2.4" height="2.4" fill="#fff" stroke="#3a4456" stroke-width=".9"/></svg><svg class="abs" style="left:4px;top:354px" width="16" height="16" viewBox="0 0 16 16" stroke-width="1.25"><path d="M6 7v-6h6l3 3v8h-4" fill="url(#lgp)" stroke="#3a4456"/><rect x="2" y="7" width="9" height="6" fill="url(#lgp)" stroke="#3a4456"/><circle cx="10" cy="12" r="2.600" fill="#f4f4f4" stroke="#3a4456" stroke-width=".9"/><path d="M16 12v4h-4z" fill="#111"/><rect x="0.8" y="11.8" width="2.4" height="2.4" fill="#fff" stroke="#3a4456" stroke-width=".9"/></svg><svg class="abs" style="left:4px;top:376px" width="16" height="16" viewBox="0 0 16 16" stroke-width="1.25"><rect x="2.500" y="3.500" width="10" height="7" fill="url(#lgp)" stroke="#3a4456"/><circle cx="12" cy="10.500" r="3" fill="#f4f4f4" stroke="#3a4456" stroke-width=".9"/><rect x="1.3" y="9.3" width="2.4" height="2.4" fill="#fff" stroke="#3a4456" stroke-width=".9"/></svg><svg class="abs" style="left:4px;top:398px" width="16" height="16" viewBox="0 0 16 16" stroke-width="1.25"><rect x="6.7" y="6.7" width="2.6" height="2.6" fill="#fff" stroke="#3a4456" stroke-width=".9"/></svg><svg class="abs" style="left:4px;top:420px" width="16" height="16" viewBox="0 0 16 16" stroke-width="1.25"><rect x="3.500" y="3.500" width="9.500" height="9.500" fill="#fff" stroke="none"/><path d="M4 6.500l6 6.500M4 9.500l3 3.500M5.500 4l7 7.500M8.500 4l4 4.500" stroke="#3a4456" stroke-width=".9"/><path d="M9.500 15.500l6-6v6z" fill="#8a94a8" stroke="none"/><path d="M3.500 .5v15.500M13 .5v15.500M.5 3.500h15.500M.5 13h15.500" stroke="#3a4456" stroke-width="1.200"/><path d="M7 16l9-9" stroke="#3a4456" stroke-width=".9"/></svg><svg class="abs" style="left:4px;top:442px" width="16" height="16" viewBox="0 0 16 16" stroke-width="1.25"><defs><linearGradient id="gg" x1="0" y1="0" x2="0" y2="1"><stop offset="0" stop-color="#5a6478"/><stop offset="1" stop-color="#f0f2f6"/></linearGradient></defs><rect x="3.500" y="3.500" width="9.500" height="9.500" fill="url(#gg)" stroke="none"/><path d="M9.500 15.500l6-6v6z" fill="#8a94a8" stroke="none"/><path d="M3.500 .5v15.500M13 .5v15.500M.5 3.500h15.500M.5 13h15.500" stroke="#3a4456" stroke-width="1.200"/><path d="M7 16l9-9" stroke="#3a4456" stroke-width=".9"/></svg><svg class="abs" style="left:4px;top:464px" width="16" height="16" viewBox="0 0 16 16" stroke-width="1.25"><path d="M1.500 2.500h9l4.500 4.500v6.500h-13.500z" fill="url(#lgp)" stroke="#3a4456"/><circle cx="7.500" cy="8" r="2.800" fill="#fff" stroke="#3a4456" stroke-width="1.100"/></svg><svg class="abs" style="left:4px;top:486px" width="16" height="16" viewBox="0 0 16 16" stroke-width="1.25"><rect x="1.500" y="1.500" width="13" height="13" rx="1" fill="#fff" stroke="#3a4456"/><rect x="2" y="2" width="12" height="2.500" fill="#9aa4b8"/><path d="M1.500 4.500h13M1.500 8h13M1.500 11.500h13M6 4.500v10M10 4.500v10" stroke="#8a94a8" stroke-width=".9"/><rect x="1.500" y="1.500" width="13" height="13" rx="1" fill="none" stroke="#3a4456"/></svg><svg class="abs" style="left:4px;top:508px" width="16" height="16" viewBox="0 0 16 16" stroke-width="1.25"><text x="8" y="14.500" text-anchor="middle" font-family="Liberation Sans,sans-serif" font-size="19" fill="#333">A</text></svg><svg class="abs" style="left:4px;top:530px" width="16" height="16" viewBox="0 0 16 16" stroke-width="1.25"><circle cx="3.500" cy="4" r="3" fill="#6aa84a" stroke="#3a7a20" stroke-width=".8"/><circle cx="12.500" cy="12.500" r="3" fill="#a8d4f4" stroke="#2a78d0" stroke-width="1"/><path d="M8 3.500h2.500v4" fill="none" stroke="#111" stroke-width="1.200"/><path d="M8.500 6.500h4l-2 2.500z" fill="#111"/></svg>
<div class="abs" style="left:1892px;top:100px;width:25px;height:404px;background:#3e3e3e"></div><div class="abs" style="left:1893px;top:101px;width:23px;height:402px;background:#ebebeb"></div><svg class="abs" style="left:1893px;top:101px;background:#5a5a5a" width="23" height="8" shape-rendering="crispEdges"><rect x="4" y="2" width="1" height="1" fill="#1e1e1e"/><rect x="4" y="4" width="1" height="1" fill="#1e1e1e"/><rect x="6" y="2" width="1" height="1" fill="#1e1e1e"/><rect x="6" y="4" width="1" height="1" fill="#1e1e1e"/><rect x="8" y="2" width="1" height="1" fill="#1e1e1e"/><rect x="8" y="4" width="1" height="1" fill="#1e1e1e"/><rect x="10" y="2" width="1" height="1" fill="#1e1e1e"/><rect x="10" y="4" width="1" height="1" fill="#1e1e1e"/><rect x="12" y="2" width="1" height="1" fill="#1e1e1e"/><rect x="12" y="4" width="1" height="1" fill="#1e1e1e"/><rect x="14" y="2" width="1" height="1" fill="#1e1e1e"/><rect x="14" y="4" width="1" height="1" fill="#1e1e1e"/><rect x="16" y="2" width="1" height="1" fill="#1e1e1e"/><rect x="16" y="4" width="1" height="1" fill="#1e1e1e"/><rect x="18" y="2" width="1" height="1" fill="#1e1e1e"/><rect x="18" y="4" width="1" height="1" fill="#1e1e1e"/></svg><svg class="abs" style="left:1896px;top:112px" width="16" height="16" viewBox="0 0 16 16" stroke-width="1.25"><path d="M3 10l9-9 3 2.500-8 9.500z" fill="#f4e8c8" stroke="#3a4456" stroke-width=".8"/><path d="M12 1l3 2.500-1.500 1.800-3-2.800z" fill="#f4f4f4" stroke="#3a4456" stroke-width=".6"/><path d="M3 10l4 3-2 1.500c-1.500 1-3.500-.5-3-2.500z" fill="#e05818" stroke="#8a2a08" stroke-width=".6"/><path d="M1 15.500h14" stroke="#3a4456" stroke-width=".9"/></svg><svg class="abs" style="left:1896px;top:134px" width="16" height="16" viewBox="0 0 16 16" stroke-width="1.25"><circle cx="4" cy="4" r="3" fill="#fff" stroke="#3a4456" stroke-width=".9"/><circle cx="10" cy="10" r="3" fill="#cfe4f8" stroke="#2a78d0"/><circle cx="12" cy="12.500" r="3" fill="#cfe4f8" stroke="#2a78d0"/><path d="M9 3h3.500v2.500" fill="none" stroke="#111" stroke-width="1"/><path d="M11 5h3l-1.500 2z" fill="#111"/></svg><svg class="abs" style="left:1896px;top:156px" width="16" height="16" viewBox="0 0 16 16" stroke-width="1.25"><path d="M8 .5v15" stroke="#111" stroke-width="1.200"/><path d="M6 3v10h-5z" fill="#fff" stroke="#3a4456" stroke-width=".9"/><path d="M10 3v10h5z" fill="#a8d0f4" stroke="#2a78d0" stroke-width=".9"/></svg><svg class="abs" style="left:1896px;top:178px" width="16" height="16" viewBox="0 0 16 16" stroke-width="1.25"><path d="M2 12.500c-1.500-3 .5-5 3-5 0-3 2-5 4.500-5s4.500 2 4.500 5v2h-6v3z" fill="none" stroke="#3a4456" stroke-width="1.300"/><path d="M1.500 14.500h13v-4" fill="none" stroke="#2a78d0" stroke-width="1.300"/></svg><svg class="abs" style="left:1896px;top:200px" width="16" height="16" viewBox="0 0 16 16" stroke-width="1.25"><rect x="1.500" y="1.500" width="5" height="5" fill="#fff" stroke="#3a4456"/><rect x="9.500" y="1.500" width="5" height="5" fill="#d4e8fa" stroke="#2a78d0"/><rect x="1.500" y="9.500" width="5" height="5" fill="#d4e8fa" stroke="#2a78d0"/><path d="M9.500 14.500v-5h5" fill="none" stroke="#2a78d0"/><path d="M16 11v5h-5z" fill="#111"/></svg><svg class="abs" style="left:1896px;top:222px" width="16" height="16" viewBox="0 0 16 16" stroke-width="1.25"><path d="M8 1v14M1 8h14" stroke="#3a4456" stroke-width="1" stroke-dasharray="2 1"/><path d="M8 0l2.500 3h-5zM8 16l2.500-3h-5zM0 8l3-2.500v5zM16 8l-3-2.500v5z" fill="#222"/><rect x="6.500" y="6.500" width="3" height="3" fill="#fff" stroke="#3a4456"/></svg><svg class="abs" style="left:1896px;top:244px" width="16" height="16" viewBox="0 0 16 16" stroke-width="1.25"><path d="M8.500 2.500a6 6 0 1 1-4 1.500" fill="none" stroke="#4a5468" stroke-width="1.300"/><path d="M6.500 .5l4 2-3.500 2.500z" fill="#333"/></svg><svg class="abs" style="left:1896px;top:266px" width="16" height="16" viewBox="0 0 16 16" stroke-width="1.25"><rect x="1.500" y="1.500" width="13" height="13" fill="#d4e8fa" stroke="#2a78d0" stroke-width="1.200"/><rect x="1.500" y="7.500" width="7" height="7" fill="#fff" stroke="#3a4456"/></svg><svg class="abs" style="left:1896px;top:288px" width="16" height="16" viewBox="0 0 16 16" stroke-width="1.25"><path d="M1.500 1.500h7v13h-7z" fill="#fff" stroke="#3a4456"/><path d="M8.500 1.500h3l3.500 13h-6.500z" fill="#a8d0f4" stroke="#2a78d0"/><path d="M5 11.500h5" stroke="#111" stroke-width="1.200"/><path d="M9.500 9.500l2.500 2-2.500 2z" fill="#111"/></svg><svg class="abs" style="left:1896px;top:310px" width="16" height="16" viewBox="0 0 16 16" stroke-width="1.25"><path d="M.5 8.500h4" stroke="#111" stroke-width="1.200"/><path d="M5 14.500l5-13" stroke="#2a78d0" stroke-width="1.300"/><path d="M8.500 8.500h7" stroke="#2a78d0" stroke-width="1.200" stroke-dasharray="2 1.200"/></svg><svg class="abs" style="left:1896px;top:332px" width="16" height="16" viewBox="0 0 16 16" stroke-width="1.25"><path d="M.5 8.500h5" stroke="#111" stroke-width="1.200"/><path d="M6.500 8.500h5" stroke="#2a78d0" stroke-width="1.200" stroke-dasharray="2 1.200"/><path d="M10.500 14.500l5-13" stroke="#2a78d0" stroke-width="1.300"/></svg><svg class="abs" style="left:1896px;top:354px" width="16" height="16" viewBox="0 0 16 16" stroke-width="1.25"><path d="M1.500 14.500v-10h13v10" fill="url(#lgp)" stroke="#3a4456"/><rect x="11" y="3" width="2.600" height="2.600" fill="#2a78d0"/></svg><svg class="abs" style="left:1896px;top:376px" width="16" height="16" viewBox="0 0 16 16" stroke-width="1.25"><path d="M1.500 14.500v-10h4M10.500 4.500h4v10" fill="none" stroke="#3a4456"/><rect x="1.800" y="5" width="12.400" height="9.500" fill="url(#lgp)"/><rect x="4.500" y="3" width="2.600" height="2.600" fill="#2a78d0"/><rect x="9" y="3" width="2.600" height="2.600" fill="#2a78d0"/></svg><svg class="abs" style="left:1896px;top:398px" width="16" height="16" viewBox="0 0 16 16" stroke-width="1.25"><path d="M1 8h4M11 8h4" stroke="#2a78d0" stroke-width="1.200"/><path d="M5 6l3 2-3 2zM11 6l-3 2 3 2z" fill="#2a78d0"/></svg><svg class="abs" style="left:1896px;top:420px" width="16" height="16" viewBox="0 0 16 16" stroke-width="1.25"><path d="M1.500 14.500v-7l6-6h7v13z" fill="url(#lgp)"/><path d="M14.500 1.500v13M1.500 14.500v-7" fill="none" stroke="#3a4456"/><path d="M1.500 7.500l6-6h7" fill="none" stroke="#2a78d0" stroke-width="1.300"/></svg><svg class="abs" style="left:1896px;top:442px" width="16" height="16" viewBox="0 0 16 16" stroke-width="1.25"><path d="M1.500 14.500v-6c0-4 3-7 7-7h6v13z" fill="url(#lgp)"/><path d="M14.500 1.500v13M1.500 14.500v-5" fill="none" stroke="#3a4456"/><path d="M1.500 9.500c0-4.500 3.500-8 8-8h5" fill="none" stroke="#2a78d0" stroke-width="1.300"/></svg><svg class="abs" style="left:1896px;top:464px" width="16" height="16" viewBox="0 0 16 16" stroke-width="1.25"><path d="M1.500 11c1.500-5 4-5 6-2s4.500 3 6.500-3" fill="none" stroke="#2a78d0" stroke-width="1.400"/><path d="M1.500 15v-4M14.500 6v-4.500" stroke="#3a4456" stroke-width="1"/><rect x="0.30000000000000004" y="9.8" width="2.4" height="2.4" fill="#fff" stroke="#3a4456" stroke-width=".9"/><rect x="13.3" y="4.3" width="2.4" height="2.4" fill="#fff" stroke="#3a4456" stroke-width=".9"/></svg><svg class="abs" style="left:1896px;top:486px" width="16" height="16" viewBox="0 0 16 16" stroke-width="1.25"><path d="M1.500 7.500h8v6h-8zM1.500 7.500l3-3h8l-3 3M12.500 4.500v6l-3 3" fill="#d4e8fa" stroke="#2a78d0" stroke-width="1.100"/><path d="M4 5l1.500-3h8.500l-1.500 3M14 2v6l-1.500 2" fill="none" stroke="#2a78d0" stroke-width="1"/></svg>
<div class="abs" style="left:1892px;top:505px;width:25px;height:148px;background:#3e3e3e"></div><div class="abs" style="left:1893px;top:506px;width:23px;height:146px;background:#ebebeb"></div><svg class="abs" style="left:1893px;top:506px;background:#5a5a5a" width="23" height="8" shape-rendering="crispEdges"><rect x="4" y="2" width="1" height="1" fill="#1e1e1e"/><rect x="4" y="4" width="1" height="1" fill="#1e1e1e"/><rect x="6" y="2" width="1" height="1" fill="#1e1e1e"/><rect x="6" y="4" width="1" height="1" fill="#1e1e1e"/><rect x="8" y="2" width="1" height="1" fill="#1e1e1e"/><rect x="8" y="4" width="1" height="1" fill="#1e1e1e"/><rect x="10" y="2" width="1" height="1" fill="#1e1e1e"/><rect x="10" y="4" width="1" height="1" fill="#1e1e1e"/><rect x="12" y="2" width="1" height="1" fill="#1e1e1e"/><rect x="12" y="4" width="1" height="1" fill="#1e1e1e"/><rect x="14" y="2" width="1" height="1" fill="#1e1e1e"/><rect x="14" y="4" width="1" height="1" fill="#1e1e1e"/><rect x="16" y="2" width="1" height="1" fill="#1e1e1e"/><rect x="16" y="4" width="1" height="1" fill="#1e1e1e"/><rect x="18" y="2" width="1" height="1" fill="#1e1e1e"/><rect x="18" y="4" width="1" height="1" fill="#1e1e1e"/></svg><svg class="abs" style="left:1896px;top:517px" width="16" height="16" viewBox="0 0 16 16" stroke-width="1.25"><rect x="1.500" y="1.500" width="8" height="6.500" fill="#fff" stroke="#3a4456"/><rect x="6.500" y="8.500" width="8" height="6" fill="#fff" stroke="#3a4456"/><rect x="4.500" y="4.500" width="8" height="6.500" fill="#a4aec0" stroke="#3a4456"/></svg><svg class="abs" style="left:1896px;top:539px" width="16" height="16" viewBox="0 0 16 16" stroke-width="1.25"><rect x="4.500" y="4.500" width="8" height="6.500" fill="#a4aec0" stroke="#3a4456"/><rect x="1.500" y="1.500" width="8" height="6.500" fill="#fff" stroke="#3a4456"/><rect x="6.500" y="8.500" width="8" height="6" fill="#fff" stroke="#3a4456"/></svg><svg class="abs" style="left:1896px;top:561px" width="16" height="16" viewBox="0 0 16 16" stroke-width="1.25"><rect x="1.500" y="2.500" width="9" height="7" fill="#fff" stroke="#3a4456"/><rect x="5.500" y="6.500" width="9" height="7" fill="#a4aec0" stroke="#3a4456"/></svg><svg class="abs" style="left:1896px;top:583px" width="16" height="16" viewBox="0 0 16 16" stroke-width="1.25"><rect x="5.500" y="6.500" width="9" height="7" fill="#a4aec0" stroke="#3a4456"/><rect x="1.500" y="2.500" width="9" height="7" fill="#fff" stroke="#3a4456"/></svg><div class="abs" style="left:1896px;top:604px;width:17px;height:1px;background:#a0a0a0"></div><svg class="abs" style="left:1896px;top:610px" width="16" height="16" viewBox="0 0 16 16" stroke-width="1.25"><text x="1" y="7" font-family="Liberation Mono,monospace" font-weight="bold" font-size="7.500" fill="#111" textLength="11">ABC</text><path d="M3.500 9v4.500h8v-3" fill="none" stroke="#3a4456"/><path d="M16 12v4h-4z" fill="#111"/></svg><svg class="abs" style="left:1896px;top:632px" width="16" height="16" viewBox="0 0 16 16" stroke-width="1.25"><rect x="1.500" y="1.500" width="11" height="8" fill="#a4aec0" stroke="#3a4456"/><path d="M7 10v5M14 4v11M7 13.500h7M4 15h12" stroke="#3a4456" stroke-width=".8" fill="none"/><path d="M9 12l3 3M12 12l-3 3" stroke="#3a4456" stroke-width=".7"/></svg><!-- drawing area frame -->
<div class="abs" style="left:29px;top:100px;width:1859px;height:856px;background:#f0f0f0;border-left:2px solid #a6a6a6;border-top:2px solid #a6a6a6"></div>
<svg id="dwg" width="1838" height="837" viewBox="31 102 1838 837" style="position:absolute;left:31px;top:102px;background:#212830">
<path d="M33.5 102V939M66.5 102V939M100.5 102V939M167.5 102V939M200.5 102V939M234.5 102V939M267.5 102V939M334.5 102V939M367.5 102V939M401.5 102V939M434.5 102V939M501.5 102V939M534.5 102V939M568.5 102V939M601.5 102V939M668.5 102V939M701.5 102V939M735.5 102V939M768.5 102V939M835.5 102V939M868.5 102V939M902.5 102V939M935.5 102V939M1002.5 102V939M1035.5 102V939M1069.5 102V939M1102.5 102V939M1169.5 102V939M1202.5 102V939M1236.5 102V939M1269.5 102V939M1336.5 102V939M1369.5 102V939M1403.5 102V939M1436.5 102V939M1503.5 102V939M1537.5 102V939M1570.5 102V939M1603.5 102V939M1670.5 102V939M1704.5 102V939M1737.5 102V939M1770.5 102V939M1837.5 102V939M31 154.5H1869M31 187.5H1869M31 221.5H1869M31 254.5H1869M31 321.5H1869M31 354.5H1869M31 388.5H1869M31 421.5H1869M31 488.5H1869M31 521.5H1869M31 555.5H1869M31 588.5H1869M31 655.5H1869M31 688.5H1869M31 722.5H1869M31 755.5H1869M31 822.5H1869M31 855.5H1869M31 889.5H1869M31 922.5H1869" stroke="#272d39" stroke-width="1" fill="none" shape-rendering="crispEdges"/>
<path d="M133.5 102V939M300.5 102V939M467.5 102V939M634.5 102V939M802.5 102V939M969.5 102V939M1136.5 102V939M1303.5 102V939M1470.5 102V939M1637.5 102V939M1804.5 102V939M31 120.5H1869M31 288.5H1869M31 455.5H1869M31 622.5H1869M31 789.5H1869" stroke="#343a4c" stroke-width="1" fill="none" shape-rendering="crispEdges"/>
<path d="M669.2 245.6L717.5 245.6L711.5 301.7L675.2 301.7ZM693.4 322.8L703.7 327.1L708.1 337.5L703.7 347.9L693.4 352.2L683.0 347.9L678.6 337.5L683.0 327.1ZM744.9 250.2L790.5 265.8L766.7 317.0L732.3 305.2ZM737.9 330.2L748.3 334.5L752.6 344.9L748.3 355.3L737.9 359.6L727.5 355.3L723.2 344.9L727.5 334.5ZM814.9 279.1L853.1 308.7L813.9 349.3L785.2 327.0ZM777.6 351.7L788.0 356.0L792.3 366.4L788.0 376.8L777.6 381.1L767.2 376.8L762.9 366.4L767.2 356.0ZM871.9 329.1L898.3 369.6L848.0 395.2L828.2 364.8ZM808.1 384.9L818.5 389.2L822.8 399.6L818.5 410.0L808.1 414.3L797.7 410.0L793.4 399.6L797.7 389.2ZM909.4 395.0L921.3 441.8L865.4 449.8L856.5 414.6ZM826.3 426.2L836.6 430.5L841.0 440.9L836.6 451.3L826.3 455.6L815.9 451.3L811.6 440.9L815.9 430.5ZM923.6 469.4L919.6 517.6L864.2 507.0L867.2 470.8ZM830.0 471.2L840.4 475.5L844.7 485.9L840.4 496.3L830.0 500.6L819.6 496.3L815.3 485.9L819.6 475.5ZM912.8 544.5L893.4 588.7L844.4 560.7L859.0 527.4ZM818.9 515.0L829.3 519.3L833.6 529.7L829.3 540.1L818.9 544.4L808.5 540.1L804.2 529.7L808.5 519.3ZM878.2 611.9L845.5 647.5L808.3 605.1L832.8 578.3ZM794.2 552.8L804.6 557.1L808.9 567.5L804.6 577.8L794.2 582.2L783.8 577.8L779.5 567.5L783.8 557.1ZM541.2 647.5L508.5 611.9L553.9 578.3L578.4 605.1ZM592.5 552.8L602.9 557.1L607.2 567.5L602.9 577.8L592.5 582.2L582.1 577.8L577.8 567.5L582.1 557.1ZM493.3 588.7L473.9 544.5L527.7 527.4L542.3 560.7ZM567.8 515.0L578.2 519.3L582.5 529.7L578.2 540.1L567.8 544.4L557.4 540.1L553.1 529.7L557.4 519.3ZM467.1 517.6L463.1 469.4L519.5 470.8L522.5 507.0ZM556.7 471.2L567.1 475.5L571.4 485.9L567.1 496.3L556.7 500.6L546.3 496.3L542.0 485.9L546.3 475.5ZM465.4 441.8L477.3 395.0L530.2 414.6L521.3 449.8ZM560.4 426.2L570.8 430.5L575.1 440.9L570.8 451.3L560.4 455.6L550.1 451.3L545.7 440.9L550.1 430.5ZM488.4 369.6L514.8 329.1L558.5 364.8L538.7 395.2ZM578.6 384.9L589.0 389.2L593.3 399.6L589.0 410.0L578.6 414.3L568.2 410.0L563.9 399.6L568.2 389.2ZM533.6 308.7L571.8 279.1L601.5 327.0L572.8 349.3ZM609.1 351.7L619.5 356.0L623.8 366.4L619.5 376.8L609.1 381.1L598.7 376.8L594.4 366.4L598.7 356.0ZM596.2 265.8L641.8 250.2L654.4 305.2L620.0 317.0ZM648.8 330.2L659.2 334.5L663.5 344.9L659.2 355.3L648.8 359.6L638.4 355.3L634.1 344.9L638.4 334.5Z" stroke="#fff" stroke-width="0.99" fill="none" shape-rendering="crispEdges"/>
<path d="M615.7 587.7L695.0 611.1L770.5 587.7L823.4 664.4L720.7 703.2L731.3 676.5L721.1 648.5L693.5 638.7L666.3 648.5L654.7 676.5L665.6 703.2L563.6 664.4ZM693.5 648.2L713.7 656.6L722.1 676.8L713.7 697.0L693.5 705.4L673.3 697.0L664.9 676.8L673.3 656.6ZM563.6 664.4L605.9 687.1M631.6 696.1L665.6 703.2M823.4 664.4L781.1 687.5M754.7 696.1L720.7 703.2" stroke="#fff" stroke-width="0.99" fill="none" shape-rendering="crispEdges"/>
<path d="M590.5 626.5L624.5 592.5M578.5 668.5L644.5 602.5M588.5 673.5L656.5 605.5M609.5 682.5L681.5 610.5M615.5 691.5L695.5 611.5M639.5 697.5L655.5 681.5M654.5 697.5L658.5 693.5M698.5 639.5L732.5 605.5M709.5 642.5L755.5 596.5M725.5 656.5L779.5 602.5M730.5 666.5L786.5 610.5M726.5 702.5L798.5 630.5M742.5 700.5L804.5 638.5M787.5 685.5L817.5 655.5" stroke="#fff" stroke-width="0.99" fill="none" shape-rendering="crispEdges"/>
<path d="M463.5 483.5L477.5 469.5M465.5 497.5L491.5 471.5M465.5 510.5L505.5 470.5M477.5 515.5L519.5 473.5M496.5 512.5L520.5 488.5M515.5 506.5L521.5 500.5M545.5 492.5L563.5 474.5M552.5 499.5L570.5 481.5" stroke="#fff" stroke-width="0.99" fill="none" shape-rendering="crispEdges"/>
<path d="M920.1 517.8L991.9 615.0M665.6 703.2L737.6 800.7M735.6 796.3L989.8 612.0" stroke="#fff" stroke-width="0.99" fill="none" shape-rendering="crispEdges"/>
<path d="M735.6 796.3L743.8 792.3L741.9 789.7ZM989.8 612.0L981.6 616.0L983.4 618.6Z" fill="#fff" stroke="none"/>
<text x="857.0" y="699.1" transform="rotate(-35.9 857.0 699.1)" text-anchor="middle" font-family="'Liberation Mono',monospace" font-size="10" fill="#ececec" dy="4.3">94.24</text>
<path d="M873.5 102V939" stroke="#fff" stroke-width="1" shape-rendering="crispEdges"/>
<path d="M477 345.5H574M525.5 297V394M522.5 342.5h6v6h-6z" stroke="#fff" stroke-width="0.99" fill="none" shape-rendering="crispEdges"/>
<path d="M51.5 868V913M47.5 913.5h9v9h-9zM57 918.5H102" stroke="#fff" stroke-width="0.99" fill="none" shape-rendering="crispEdges"/>
<path d="M53 851L59.5 858.5L66 851M59.5 858.5V864.5M106 904L119 917M119 904L106 917" stroke="#fff" stroke-width="0.99" fill="none" shape-rendering="crispEdges"/>
<text x="35" y="119" font-family="'Liberation Sans','Noto Sans CJK SC',sans-serif" font-size="12" fill="#e6e6e6" textLength="104" lengthAdjust="spacing">[−][俯视][二维线框]</text>
</svg>
<!-- view cube -->
<svg class="abs" style="left:1716px;top:112px" width="142" height="180" viewBox="1716 112 142 180">
<circle cx="1786.700" cy="183" r="53.500" fill="none" stroke="#42474f" stroke-width="13"/>
<rect x="1761.500" y="157.500" width="51.500" height="51.500" fill="#b5b5b5"/>
<rect x="1761.500" y="157.500" width="51.500" height="51.500" fill="none" stroke="#9a9a9a" stroke-width="1"/>
<rect x="1771" y="167" width="32" height="31.500" fill="#a1a5ad"/>
<g font-family="'Liberation Serif','Noto Serif CJK SC',serif" fill="#b9b9b9" font-size="20" text-anchor="middle">
<text x="1787" y="137">北</text><text x="1787" y="248">南</text><text x="1731" y="191">西</text><text x="1843" y="191">东</text>
<text x="1787" y="193" font-size="26" fill="#5d6068">上</text></g>
<rect x="1763.500" y="270.500" width="47" height="17" rx="4" fill="#a3a5b3"/>
<text x="1768" y="283" font-family="'Liberation Sans',sans-serif" font-size="10.500" fill="#70737f">WCS</text>
<path d="M1797.500 276.500h8l-4 5z" fill="none" stroke="#7e818d" stroke-width="1"/>
</svg>
<!-- vertical scrollbar -->
<div class="abs" style="left:1869px;top:102px;width:19px;height:837px;background:linear-gradient(90deg,#fff 0,#e6e6e6 10%,#f1f1f1 85%,#fff 92%);border-bottom:1px solid #b8b8b8"></div>
<div class="abs" style="left:1874px;top:108px;border:4px solid transparent;border-bottom:4px solid #444;border-top:0"></div>
<div class="abs" style="left:1874px;top:929px;border:4px solid transparent;border-top:4px solid #444;border-bottom:0"></div>
<div class="abs" style="left:1870px;top:432px;width:15px;height:15px;border:1px solid #9aa0a8;border-radius:2px;background:linear-gradient(90deg,#f6f6f6,#e0e0e0 50%,#cfcfcf)"></div>
<!-- tab row -->
<div class="abs" style="left:31px;top:939px;width:1857px;height:17px;background:#f0f0f0"></div>
<svg class="abs" style="left:31px;top:939px" width="200" height="17" viewBox="31 939 200 17">
<g fill="#f4f4f4" stroke="#a8a8a8"><rect x="31.500" y="940.500" width="13" height="12"/><rect x="45.500" y="940.500" width="13" height="12"/><rect x="59.500" y="940.500" width="13" height="12"/><rect x="73.500" y="940.500" width="13" height="12"/></g>
<path d="M35 942v9M41 942v9l-5-4.500zM55 942v9l-5-4.500zM63 942v9l5-4.500zM77 942v9l5-4.500zM83 942v9" fill="#4a4a4a" stroke="#4a4a4a" stroke-width="1"/>
<path d="M87 939h47.500l-6 14.500h-35.500z" fill="#212830"/>
<path d="M128 953.500l6.500-14.500M170 953.500l6.500-14.500M215 953.500l6.500-14.500" stroke="#555" stroke-width="1" fill="none"/>
<path d="M87 953.500h130" stroke="#888" stroke-width="1"/>
<g font-family="'Liberation Sans','Noto Sans CJK SC',sans-serif" font-size="12">
<text x="98" y="951" fill="#fff">模型</text><text x="137.500" y="951" fill="#000">布局1</text><text x="183.500" y="951" fill="#000">布局2</text></g>
</svg>
<!-- h scrollbar -->
<div class="abs" style="left:1244px;top:940px;width:5px;height:13px;border:1px solid #9aa4ae;border-right:0;background:#f6f6f6"></div>
<div class="abs" style="left:1250px;top:939px;width:619px;height:15px;background:linear-gradient(#fff 0,#e8e8e8 12%,#efefef 100%)"></div>
<div class="abs" style="left:1255px;top:942px;border:4px solid transparent;border-right:4px solid #333;border-left:0"></div>
<div class="abs" style="left:1859px;top:942px;border:4px solid transparent;border-left:4px solid #333;border-right:0"></div>
<div class="abs" style="left:1828px;top:940px;width:14px;height:13px;border:1px solid #9aa0a8;border-radius:2px;background:linear-gradient(#f4f4f4,#dcdcdc 50%,#cecece)"></div>
<div class="abs" style="left:0;top:961px;width:23px;height:57px;background:#4c4c4c"></div>
<svg class="abs" style="left:0;top:961px" width="23" height="57" shape-rendering="crispEdges"><rect x="3" y="3" width="1" height="1" fill="#9a9a9a"/><rect x="3" y="5" width="1" height="1" fill="#9a9a9a"/><rect x="5" y="3" width="1" height="1" fill="#9a9a9a"/><rect x="5" y="5" width="1" height="1" fill="#9a9a9a"/><rect x="7" y="3" width="1" height="1" fill="#9a9a9a"/><rect x="7" y="5" width="1" height="1" fill="#9a9a9a"/><rect x="9" y="3" width="1" height="1" fill="#9a9a9a"/><rect x="9" y="5" width="1" height="1" fill="#9a9a9a"/><rect x="11" y="3" width="1" height="1" fill="#9a9a9a"/><rect x="11" y="5" width="1" height="1" fill="#9a9a9a"/><rect x="13" y="3" width="1" height="1" fill="#9a9a9a"/><rect x="13" y="5" width="1" height="1" fill="#9a9a9a"/><rect x="15" y="3" width="1" height="1" fill="#9a9a9a"/><rect x="15" y="5" width="1" height="1" fill="#9a9a9a"/><rect x="17" y="3" width="1" height="1" fill="#9a9a9a"/><rect x="17" y="5" width="1" height="1" fill="#9a9a9a"/><rect x="19" y="3" width="1" height="1" fill="#9a9a9a"/><rect x="19" y="5" width="1" height="1" fill="#9a9a9a"/></svg>
<svg class="abs" style="left:5px;top:976px" width="12" height="12"><path d="M2 2l8 8M10 2l-8 8" stroke="#f0f0f0" stroke-width="1.800"/></svg>
<svg class="abs" style="left:3px;top:997px" width="17" height="17" viewBox="0 0 17 17"><path d="M15 14.500l-7.500-7.500c.8-2-.2-4-2-5-.8-.4-1.800-.5-2.500-.3l2.500 2.500-.5 2-2 .5-2.500-2.500c-.3 1 0 2 .5 3 1 1.800 3 2.500 5 1.800l7.500 7.500c.8.800 2.300-.7 1.500-2z" fill="#f4f4f4" stroke="#d0d0d0" stroke-width=".5"/></svg>
<div class="abs" style="left:23px;top:961px;width:1897px;height:34px;background:#cecece;border-top:1px solid #dadada;border-bottom:1px solid #8e8e8e"></div>
<style>.cmd{position:absolute;left:25px;font-family:"Liberation Mono","Noto Sans CJK SC",monospace;font-size:11.667px;line-height:15px;height:15px;white-space:pre;color:#111}.cmd .cj{font-family:"Liberation Sans","Noto Sans CJK SC",sans-serif;font-size:13px;line-height:15px}</style>
<div class="cmd" style="top:961px"><span class="cj">命令</span>: _.undo <span class="cj">当前设置</span>: <span class="cj">自动</span> = <span class="cj">开</span>, <span class="cj">控制</span> = <span class="cj">全部</span>, <span class="cj">合并</span> = <span class="cj">是</span>, <span class="cj">图层</span> = <span class="cj">是</span></div>
<div class="cmd" style="top:976px"><span class="cj">输入要放弃的操作数目或</span> [<span class="cj">自动</span>(A)/<span class="cj">控制</span>(C)/<span class="cj">开始</span>(BE)/<span class="cj">结束</span>(E)/<span class="cj">标记</span>(M)/<span class="cj">后退</span>(B)] &lt;1&gt;: 1 INTELLIZOOM <span class="cj">滚动</span> <span class="cj">滚动</span> INTELLIZOOM INTELLIZOOM INTELLIZOOM INTELLIZOOM INTELLIZOOM INTELLIZOOM INTELLIZOOM</div>
<div class="abs" style="left:23px;top:995px;width:1897px;height:23px;background:#fff;border-bottom:1px solid #1a1a1a"></div>
<div class="abs" style="left:0;top:1017px;width:1920px;height:1px;background:#1a1a1a"></div>
<svg class="abs" style="left:28px;top:999px" width="26" height="14" viewBox="0 0 26 14"><rect x=".5" y=".5" width="14" height="13" rx="1.500" fill="#eef0f4" stroke="#a8b0c0"/><path d="M3.500 4l4 3-4 3M8.500 11h3.500" fill="none" stroke="#3a4456" stroke-width="1.300"/><path d="M18 5.500h6l-3 3.500z" fill="#7a7a7a"/></svg>
<div class="abs" style="left:61px;top:997px;font-size:13px;line-height:18px;font-style:italic;color:#a4a4a4;white-space:nowrap">键入命令</div>
<div class="abs" style="left:0;top:1018px;width:1920px;height:23px;background:linear-gradient(#4e4e4e 0,#747474 12%,#8a8a8a 50%,#7c7c7c 95%,#39404a 96%)"></div>
<div class="abs" style="left:0;top:1019px;width:217px;height:21px;background:linear-gradient(#747474,#8a8a8a);border-right:1px solid #555;font-family:'Liberation Mono',monospace;font-size:10px;line-height:25px;color:#a2a2a2;white-space:pre;padding-left:11px"><span style="display:inline-block;transform:scaleY(1.22)">2719.2726, 13614.6600, 0.0000</span></div>
<div class="abs" style="left:218px;top:1019px;width:22px;height:21px;background:linear-gradient(#c4c4c4,#b0b0b0 50%,#a4a4a4);border-left:1px solid #7a7a7a;border-right:1px solid #d0d0d0"></div>
<svg class="abs" style="left:221px;top:1021px" width="17" height="17" viewBox="0 0 17 17"><path d="M8 1v12M2 7h12" stroke="#1a1a1a" stroke-width="1"/><rect x="5.500" y="4.500" width="5" height="5" fill="none" stroke="#1a1a1a"/><path d="M11.500 14.500v-4h3v2.500h-3" fill="none" stroke="#1a62c0" stroke-width="1.200"/><rect x="10" y="13" width="2.500" height="2.500" fill="#fff" stroke="#c04010" stroke-width=".8"/></svg>
<div class="abs" style="left:240px;top:1019px;width:22px;height:21px;background:linear-gradient(#c4c4c4,#b0b0b0 50%,#a4a4a4);border-left:1px solid #7a7a7a;border-right:1px solid #d0d0d0"></div>
<svg class="abs" style="left:243px;top:1021px" width="17" height="17" viewBox="0 0 17 17"><rect x="3" y="3" width="1.200" height="1.200" fill="#1a1a1a"/><rect x="3" y="5.5" width="1.200" height="1.200" fill="#1a1a1a"/><rect x="3" y="8" width="1.200" height="1.200" fill="#1a1a1a"/><rect x="3" y="10.5" width="1.200" height="1.200" fill="#1a1a1a"/><rect x="5.5" y="3" width="1.200" height="1.200" fill="#1a1a1a"/><rect x="5.5" y="5.5" width="1.200" height="1.200" fill="#1a1a1a"/><rect x="5.5" y="8" width="1.200" height="1.200" fill="#1a1a1a"/><rect x="5.5" y="10.5" width="1.200" height="1.200" fill="#1a1a1a"/><rect x="8" y="3" width="1.200" height="1.200" fill="#1a1a1a"/><rect x="8" y="5.5" width="1.200" height="1.200" fill="#1a1a1a"/><rect x="8" y="8" width="1.200" height="1.200" fill="#1a1a1a"/><rect x="8" y="10.5" width="1.200" height="1.200" fill="#1a1a1a"/><rect x="10.5" y="3" width="1.200" height="1.200" fill="#1a1a1a"/><rect x="10.5" y="5.5" width="1.200" height="1.200" fill="#1a1a1a"/><rect x="10.5" y="8" width="1.200" height="1.200" fill="#1a1a1a"/><rect x="10.5" y="10.5" width="1.200" height="1.200" fill="#1a1a1a"/><path d="M2.500 13.500h9M13.500 3v8.500" stroke="#1a1a1a" stroke-width="1.300"/><rect x="12.900" y="12.900" width="1.300" height="1.300" fill="#1a1a1a"/></svg>
<div class="abs" style="left:262px;top:1019px;width:22px;height:21px;background:linear-gradient(#d6ecf2 0,#b4d9e6 45%,#98cadb 55%,#bfe0ea 100%);border-left:1px solid #7a7a7a;border-right:1px solid #d0d0d0"></div>
<svg class="abs" style="left:265px;top:1021px" width="17" height="17" viewBox="0 0 17 17"><rect x="1" y="1.500" width="14" height="13.500" fill="#fff"/><path d="M1 2h14M1 5.300h14M1 8.600h14M1 11.900h14M1 15h14M1.500 1.500v13.500M4.750 1.500v13.500M8 1.500v13.500M11.250 1.500v13.500M14.500 1.500v13.500" stroke="#222" stroke-width="1.300"/></svg>
<div class="abs" style="left:284px;top:1019px;width:22px;height:21px;background:linear-gradient(#c4c4c4,#b0b0b0 50%,#a4a4a4);border-left:1px solid #7a7a7a;border-right:1px solid #d0d0d0"></div>
<svg class="abs" style="left:287px;top:1021px" width="17" height="17" viewBox="0 0 17 17"><path d="M2.500 1v13.500h13M2.500 9.500h5v5" fill="none" stroke="#5a5a5a" stroke-width="1.100"/></svg>
<div class="abs" style="left:306px;top:1019px;width:22px;height:21px;background:linear-gradient(#d6ecf2 0,#b4d9e6 45%,#98cadb 55%,#bfe0ea 100%);border-left:1px solid #7a7a7a;border-right:1px solid #d0d0d0"></div>
<svg class="abs" style="left:309px;top:1021px" width="17" height="17" viewBox="0 0 17 17"><path d="M12 10a4.500 4.500 0 1 1-2.500-4" fill="none" stroke="#444" stroke-width="1.200"/><path d="M7.500 10l6-7.500M7.500 10h7.500M11 5.500c1 .8 1.500 2.500 1.500 4.500" fill="none" stroke="#1a1a1a" stroke-width="1.100"/></svg>
<div class="abs" style="left:328px;top:1019px;width:22px;height:21px;background:linear-gradient(#d6ecf2 0,#b4d9e6 45%,#98cadb 55%,#bfe0ea 100%);border-left:1px solid #7a7a7a;border-right:1px solid #d0d0d0"></div>
<svg class="abs" style="left:331px;top:1021px" width="17" height="17" viewBox="0 0 17 17"><rect x="3.500" y="3.500" width="11" height="11" fill="#f0f0f0" stroke="#1a1a1a" stroke-width="1.300"/><circle cx="3.500" cy="3.500" r="1.800" fill="#fff" stroke="#e05010" stroke-width="1"/></svg>
<div class="abs" style="left:350px;top:1019px;width:22px;height:21px;background:linear-gradient(#c4c4c4,#b0b0b0 50%,#a4a4a4);border-left:1px solid #7a7a7a;border-right:1px solid #d0d0d0"></div>
<svg class="abs" style="left:353px;top:1021px" width="17" height="17" viewBox="0 0 17 17"><path d="M3 6.500l3-4h9v8l-3 4h-9z" fill="#e8e8e8" stroke="#555" stroke-width="1"/><path d="M3 6.500h9v8M12 6.500l3-4" fill="none" stroke="#555" stroke-width=".9"/><circle cx="3" cy="14.500" r="1.900" fill="#fff" stroke="#e05010" stroke-width="1.100"/></svg>
<div class="abs" style="left:372px;top:1019px;width:22px;height:21px;background:linear-gradient(#d6ecf2 0,#b4d9e6 45%,#98cadb 55%,#bfe0ea 100%);border-left:1px solid #7a7a7a;border-right:1px solid #d0d0d0"></div>
<svg class="abs" style="left:375px;top:1021px" width="17" height="17" viewBox="0 0 17 17"><path d="M2 13.500l11-9.500M2 13.500h12" stroke="#1a1a1a" stroke-width="1.300" fill="none"/></svg>
<div class="abs" style="left:394px;top:1019px;width:22px;height:21px;background:linear-gradient(#d6ecf2 0,#b4d9e6 45%,#98cadb 55%,#bfe0ea 100%);border-left:1px solid #7a7a7a;border-right:1px solid #d0d0d0"></div>
<svg class="abs" style="left:397px;top:1021px" width="17" height="17" viewBox="0 0 17 17"><path d="M2.500 1.500v13h13M2.500 14.500l10-10" fill="none" stroke="#1a1a1a" stroke-width="1"/><path d="M2.500 0l-1.800 3h3.600zM16.500 14.500l-3-1.800v3.600z" fill="#1a1a1a"/><path d="M13.500 0l-3 4.500h2l-1 3.500 4-5h-2.200l1.700-3z" fill="#f8a020" stroke="#d06000" stroke-width=".4"/></svg>
<div class="abs" style="left:416px;top:1019px;width:22px;height:21px;background:linear-gradient(#d6ecf2 0,#b4d9e6 45%,#98cadb 55%,#bfe0ea 100%);border-left:1px solid #7a7a7a;border-right:1px solid #d0d0d0"></div>
<svg class="abs" style="left:419px;top:1021px" width="17" height="17" viewBox="0 0 17 17"><path d="M6 2v10M1.500 7h9" stroke="#1a1a1a" stroke-width="1.600"/><rect x="8.500" y="9.500" width="6" height="3" fill="#fff" stroke="#1a1a1a" stroke-width="1.200"/></svg>
<div class="abs" style="left:438px;top:1019px;width:22px;height:21px;background:linear-gradient(#c4c4c4,#b0b0b0 50%,#a4a4a4);border-left:1px solid #7a7a7a;border-right:1px solid #d0d0d0"></div>
<svg class="abs" style="left:441px;top:1021px" width="17" height="17" viewBox="0 0 17 17"><path d="M8 1.500v12M2 7.500h12" stroke="#1a1a1a" stroke-width="2"/></svg>
<div class="abs" style="left:460px;top:1019px;width:22px;height:21px;background:linear-gradient(#d6ecf2 0,#b4d9e6 45%,#98cadb 55%,#bfe0ea 100%);border-left:1px solid #7a7a7a;border-right:1px solid #d0d0d0"></div>
<svg class="abs" style="left:463px;top:1021px" width="17" height="17" viewBox="0 0 17 17"><defs><pattern id="chk" width="2" height="2" patternUnits="userSpaceOnUse"><rect width="1" height="1" fill="#3a86e0"/><rect x="1" y="1" width="1" height="1" fill="#3a86e0"/></pattern></defs><rect x="1.500" y="1.500" width="14" height="13" fill="#d8ecfa"/><rect x="1.500" y="1.500" width="14" height="13" fill="url(#chk)" stroke="#1a62c8" stroke-width="1.200"/></svg>
<div class="abs" style="left:482px;top:1019px;width:22px;height:21px;background:linear-gradient(#c4c4c4,#b0b0b0 50%,#a4a4a4);border-left:1px solid #7a7a7a;border-right:1px solid #d0d0d0"></div>
<svg class="abs" style="left:485px;top:1021px" width="17" height="17" viewBox="0 0 17 17"><rect x="4.500" y="3.500" width="8" height="10" fill="#fff" stroke="#1a1a1a" stroke-width="1.300"/><path d="M6.500 6.500h4M6.500 8.500h4M6.500 10.500h4M8.500 5.500v6" stroke="#1a1a1a" stroke-width=".9"/></svg>
<div class="abs" style="left:504px;top:1019px;width:22px;height:21px;background:linear-gradient(#c4c4c4,#b0b0b0 50%,#a4a4a4);border-left:1px solid #7a7a7a;border-right:1px solid #d0d0d0"></div>
<svg class="abs" style="left:507px;top:1021px" width="17" height="17" viewBox="0 0 17 17"><path d="M4 1v5M1.500 3.500h5" stroke="#1a1a1a" stroke-width="1"/><rect x="5.500" y="6.500" width="6" height="5.500" fill="#fff" stroke="#1a1a1a"/><rect x="9" y="9.500" width="5.500" height="5.500" fill="#5a9a38" stroke="#2a6a10"/></svg>
<div class="abs" style="left:526px;top:1019px;width:22px;height:21px;background:linear-gradient(#c4c4c4,#b0b0b0 50%,#a4a4a4);border-left:1px solid #7a7a7a;border-right:1px solid #d0d0d0"></div>
<svg class="abs" style="left:529px;top:1021px" width="17" height="17" viewBox="0 0 17 17"><path d="M6 1.500h4v4.500h4.500v4h-4.500v4.500h-4v-4.500h-4.500v-4h4.500z" fill="#fff" stroke="#5a5a5a" stroke-width="1.200"/></svg>
<div class="abs" style="left:1572px;top:1019px;width:29px;height:21px;background:linear-gradient(#c4c4c4,#b0b0b0 50%,#a4a4a4);border-left:1px solid #7a7a7a;border-right:1px solid #d0d0d0"><span style="position:absolute;left:2px;top:2px;font-size:12px;line-height:16px;color:#000;white-space:nowrap">模型</span></div>
<div class="abs" style="left:1602px;top:1019px;width:22px;height:21px;background:linear-gradient(#c4c4c4,#b0b0b0 50%,#a4a4a4);border-left:1px solid #7a7a7a;border-right:1px solid #d0d0d0"></div><svg class="abs" style="left:1605px;top:1021px" width="17" height="17" viewBox="0 0 17 17"><rect x="2.500" y="1.500" width="11" height="10" fill="#f4f4f4" stroke="#333"/><path d="M5 9.500v-6l5 6z" fill="none" stroke="#222" stroke-width="1"/><path d="M1 14.500h14" stroke="#444" stroke-width="1.200"/></svg>
<div class="abs" style="left:1624px;top:1019px;width:22px;height:21px;background:linear-gradient(#c4c4c4,#b0b0b0 50%,#a4a4a4);border-left:1px solid #7a7a7a;border-right:1px solid #d0d0d0"></div><svg class="abs" style="left:1627px;top:1021px" width="17" height="17" viewBox="0 0 17 17"><rect x="1.500" y="2.500" width="6" height="7" fill="#f4f4f4" stroke="#333"/><rect x="9.500" y="2.500" width="6" height="7" fill="#f4f4f4" stroke="#333"/><path d="M2 13.500h13" stroke="#444" stroke-width="1.600"/></svg>
<div class="abs" style="left:1664px;top:1019px;width:160px;height:21px;background:linear-gradient(#c4c4c4,#b0b0b0 50%,#a4a4a4);border-left:1px solid #7a7a7a;border-right:1px solid #d0d0d0"></div>
<svg class="abs" style="left:1666px;top:1021px" width="36" height="17" viewBox="0 0 36 17"><path d="M8 1.500l2 6 5 6.500-6-3.500-1-1.500-1 1.500-6 3.500 5-6.500z" fill="#f4f4f4" stroke="#222" stroke-width="1"/><text x="19" y="14" font-family="Liberation Serif,serif" font-size="13" fill="#111">1:</text></svg>
<div class="abs" style="left:1812px;top:1019px;width:22px;height:21px;background:linear-gradient(#c4c4c4,#b0b0b0 50%,#a4a4a4);border-left:1px solid #7a7a7a;border-right:1px solid #d0d0d0"></div><svg class="abs" style="left:1814px;top:1021px" width="18" height="18" viewBox="0 0 18 18"><rect x="1.500" y="3.500" width="10" height="7" fill="#d8d8d8" stroke="#333"/><path d="M3 2v2M5.500 2v2M8 2v2M10.500 2v2M3 10v2M5.500 10v2M8 10v2" stroke="#333" stroke-width="1"/><circle cx="13" cy="11" r="2.600" fill="#f8c040" stroke="#c07000" stroke-width=".8"/><rect x="12" y="13.500" width="2" height="2.500" fill="#888"/></svg>
<div class="abs" style="left:1834px;top:1019px;width:46px;height:21px;background:linear-gradient(#9a9a9a,#b4b4b4);border:1px solid #6a6a6a;border-bottom:0"></div>
<svg class="abs" style="left:1838px;top:1021px" width="17" height="17" viewBox="0 0 17 17"><path d="M2 15l7-7c-.8-2 .2-4 2-5 .8-.4 1.800-.5 2.500-.3l-2.500 2.500.5 2 2 .5 2.500-2.500c.3 1 0 2-.5 3-1 1.800-3 2.500-5 1.800l-7 7c-.8.800-2.300-.7-1.500-2z" fill="#f4f4f4" stroke="#222" stroke-width=".9"/></svg>
<svg class="abs" style="left:1860px;top:1021px" width="14" height="17" viewBox="0 0 14 17"><path d="M7 1.500c-3 0-4.500 2-4.500 4.500 0 2 1.500 3 2 4.500v1.500h5v-1.500c.5-1.500 2-2.500 2-4.500 0-2.500-1.500-4.500-4.500-4.500z" fill="#fbe9a0" stroke="#6a5a28" stroke-width=".9"/><path d="M5 12.500h4v2l-1 1h-2l-1-1z" fill="#d8d8d8" stroke="#444" stroke-width=".8"/></svg>
<div class="abs" style="left:1888px;top:1028px;border:3.500px solid transparent;border-top:5px solid #111;border-bottom:0"></div>
<div class="abs" style="left:1897px;top:1019px;width:23px;height:21px;background:linear-gradient(#c4c4c4,#b0b0b0 50%,#a4a4a4);border-left:1px solid #7a7a7a;border-right:1px solid #d0d0d0"></div><svg class="abs" style="left:1900px;top:1021px" width="17" height="17" viewBox="0 0 17 17"><rect x="1.500" y="2.500" width="13" height="12" fill="#f8f8f8" stroke="#222" stroke-width="1.200"/><rect x="1.500" y="2.500" width="13" height="3" fill="#9a9a9a" stroke="#222"/></svg><div class="abs" style="left:0;top:1041px;width:1920px;height:39px;background:linear-gradient(#8899b3 0,#8496b0 50%,#8193ad 100%);border-top:1px solid #c0cfe6"></div>
<svg class="abs" style="left:8px;top:1041px" width="38" height="38" viewBox="0 0 38 38">
<defs><radialGradient id="orb" cx=".5" cy=".3" r=".75"><stop offset="0" stop-color="#7ec4f4"/><stop offset=".45" stop-color="#2a78c8"/><stop offset=".8" stop-color="#144a94"/><stop offset="1" stop-color="#0a2a60"/></radialGradient></defs>
<circle cx="19" cy="19" r="17.500" fill="url(#orb)" stroke="#1c3c6c" stroke-width="1.200"/>
<ellipse cx="19" cy="10" rx="13" ry="7.500" fill="#fff" opacity=".28"/>
<path d="M11 13.500c2-1.500 4.500-1.500 6.500-.3l-1.600 5.600c-2-1.200-4.300-1.200-6.500.2z" fill="#f0562a"/>
<path d="M18.800 13.800c2 1.200 4.500 1.200 6.800-.2l-1.600 5.600c-2.200 1.400-4.600 1.400-6.700.2z" fill="#8cc63e"/>
<path d="M9 20.300c2-1.400 4.400-1.400 6.500-.2l-1.600 5.600c-2-1.200-4.400-1.200-6.500.2z" fill="#2ea3e8"/>
<path d="M16.900 20.600c2 1.200 4.500 1.200 6.700-.2l-1.600 5.600c-2.200 1.400-4.600 1.400-6.700.2z" fill="#fbc21a"/>
</svg>
<svg class="abs" style="left:68px;top:1044px" width="32" height="32" viewBox="0 0 32 32">
<circle cx="10" cy="9" r="7.500" fill="#7cbf2c"/><circle cx="22" cy="9.500" r="7.500" fill="#3f9ae8"/><circle cx="22.500" cy="22" r="7.500" fill="#e0453a"/><circle cx="10" cy="22.500" r="7.500" fill="#f5b81c"/>
<circle cx="16" cy="16" r="3.500" fill="#8596b0"/></svg>
<div class="abs" style="left:133px;top:1044px;width:32px;height:32px;background:#1dbf63;color:#fff;font-family:'Liberation Sans',sans-serif;font-weight:bold;font-size:47px;line-height:23px;text-align:center;overflow:hidden">e</div>
<svg class="abs" style="left:195px;top:1044px" width="32" height="32" viewBox="0 0 32 32"><rect width="32" height="32" fill="#fff200"/>
<path d="M24.300 1.200C26.500 1 28.500 2 28 3.500C27.800 5.500 26 6.800 24.700 6.900L23 7.500C24 9.500 26.600 10.500 26.600 11.700C25.500 13.500 25.200 15 25.400 16.900C26 20 28 23 27.700 25.800C27.500 28.500 26.500 30 24.700 31C22 32 19.500 32 17.300 31.900C14 30.800 12 29.500 9.900 28C7 27.800 3 27.500 1.200 25.600C3 24.600 5 24.500 6.200 24.300C5.800 23.300 6 22.500 6.200 21.700C7 20.700 7.800 19.800 8.400 19.100C9.200 21 9.800 23.500 9.900 25.800L10.500 27C13 28 16 28.800 18.800 28.800C20.500 28.900 22 28.800 22.900 28.400C23.300 27.900 23.300 27.400 23.200 26.900C21.500 25.300 19.800 23.500 19.100 21.700C18.800 20.500 19 19.300 19.500 18.400C18 19 16 18.800 15 18C15.500 17 16.500 17.500 17.500 17C17.500 15 16.500 13 15.500 12.800C14.500 12.500 13.800 12.300 13.600 11.700C13.300 10 14.300 9.500 15 9C14 8.300 13.800 7 14 5.800C15 6.500 16 6.300 17 5.800C19 4.300 21 2.500 24.300 1.200Z" fill="#0a22f4"/></svg>
<div class="abs" style="left:244px;top:1041px;width:318px;height:40px;border:1px solid #56657f;border-radius:3px;background:linear-gradient(#a9b6ca 0,#9dabc1 45%,#8f9fb8 50%,#93a3bb 100%);box-shadow:inset 0 0 0 1px rgba(255,255,255,.35)"></div><div class="abs" style="left:401px;top:1044px;width:1px;height:36px;background:#6e7e98"></div><div class="abs" style="left:402px;top:1044px;width:1px;height:36px;background:rgba(255,255,255,.3)"></div>
<svg class="abs" style="left:252px;top:1044px" width="32" height="32" viewBox="0 0 32 32">
<defs><radialGradient id="og268" cx=".5" cy=".35" r=".7"><stop offset="0" stop-color="#f98a3a"/><stop offset="1" stop-color="#e0480c"/></radialGradient></defs>
<circle cx="16" cy="16" r="15" fill="url(#og268)" stroke="#b83a08" stroke-width=".8"/>
<path d="M6 10l4.500 11.500L16 11l5.500 10.500L26 10" fill="none" stroke="#fff" stroke-width="2.300" stroke-linejoin="round" stroke-linecap="round"/>
<circle cx="6" cy="9" r="1.800" fill="#fff"/><circle cx="16" cy="8" r="1.800" fill="#fff"/><circle cx="26" cy="9" r="1.800" fill="#fff"/>
<path d="M8 24.500c5 2.500 11 2.500 16 0" fill="none" stroke="#fff" stroke-width="1.800" stroke-linecap="round"/></svg>
<div class="abs" style="left:289px;top:1052px;font-size:12px;line-height:16px;color:#fff;white-space:nowrap;letter-spacing:0px">WXRPT_WNDTI...</div>
<svg class="abs" style="left:412px;top:1044px" width="32" height="32" viewBox="0 0 32 32">
<defs><radialGradient id="og428" cx=".5" cy=".35" r=".7"><stop offset="0" stop-color="#f98a3a"/><stop offset="1" stop-color="#e0480c"/></radialGradient></defs>
<circle cx="16" cy="16" r="15" fill="url(#og428)" stroke="#b83a08" stroke-width=".8"/>
<path d="M6 10l4.500 11.500L16 11l5.500 10.500L26 10" fill="none" stroke="#fff" stroke-width="2.300" stroke-linejoin="round" stroke-linecap="round"/>
<circle cx="6" cy="9" r="1.800" fill="#fff"/><circle cx="16" cy="8" r="1.800" fill="#fff"/><circle cx="26" cy="9" r="1.800" fill="#fff"/>
<path d="M8 24.500c5 2.500 11 2.500 16 0" fill="none" stroke="#fff" stroke-width="1.800" stroke-linecap="round"/></svg>
<div class="abs" style="left:449px;top:1052px;font-size:12px;line-height:16px;color:#fff;white-space:nowrap;letter-spacing:0px">万象网管</div>
<svg class="abs" style="left:577px;top:1042px" width="38" height="38" viewBox="0 0 38 38">
<defs><linearGradient id="ieg" x1="0" y1="0" x2="0" y2="1"><stop offset="0" stop-color="#6cc6f8"/><stop offset=".5" stop-color="#2a8ae0"/><stop offset="1" stop-color="#0c54b0"/></linearGradient></defs>
<path d="M7.500 20.800c0-6.500 4.800-11.300 11.300-11.300 6.600 0 10.800 4.800 10.400 12H14.400c.4 2.600 2.200 4 4.800 4 1.700 0 3-.6 3.900-1.800h5.800c-1.500 4.300-5.200 6.800-10 6.800-6.500 0-11.400-4.300-11.400-9.700zm6.900-3h9c-.3-2.300-2-3.800-4.500-3.800s-4.100 1.500-4.500 3.800z" fill="url(#ieg)" stroke="#0c4a9a" stroke-width=".6"/>
<path d="M5 31.500c-3.500-3 .5-12 10-19.500 8.500-6.500 17-9 19.500-6.500 1.500 1.500.3 4.800-2.500 8.500 1.500-3 1.800-5.200 1-6.200-2-2-9.500 1-16.500 6.500-7.500 6-11.500 12.500-9.500 15 1.300 1.500 4.500.8 8.500-1.300-4.500 3.300-8.500 5-10.500 3.500z" fill="#f6c834" stroke="#c8960c" stroke-width=".4"/></svg>
<div class="abs" style="left:628px;top:1041px;width:158px;height:40px;border:1px solid #56657f;border-radius:3px;background:linear-gradient(#a9b6ca 0,#9dabc1 45%,#8f9fb8 50%,#93a3bb 100%);box-shadow:inset 0 0 0 1px rgba(255,255,255,.35)"></div>
<svg class="abs" style="left:637px;top:1044px" width="33" height="33" viewBox="-16.500 -16.500 33 33">
<path d="M0 0Q-4.9 -4.9 -2.7 -15.3A15.5 15.5 0 0 1 14.4 -5.8Z" fill="#b040e4"/><path d="M0 0Q1.8 -6.8 11.9 -10.0A15.5 15.5 0 0 1 12.2 9.5Z" fill="#f23c2c"/><path d="M0 0Q6.8 -1.8 14.6 5.3A15.5 15.5 0 0 1 -2.2 15.3Z" fill="#f8981c"/><path d="M0 0Q4.9 4.9 2.7 15.3A15.5 15.5 0 0 1 -14.4 5.8Z" fill="#f6e224"/><path d="M0 0Q-1.8 6.8 -11.9 10.0A15.5 15.5 0 0 1 -12.2 -9.5Z" fill="#30c866"/><path d="M0 0Q-6.8 1.8 -14.6 -5.3A15.5 15.5 0 0 1 2.2 -15.3Z" fill="#3a88f0"/><circle r="2.200" fill="#fff"/></svg>
<div class="abs" style="left:673px;top:1052px;font-size:12px;line-height:16px;color:#fff;white-space:nowrap;letter-spacing:0px">CaTICs 网络赛官...</div>
<div class="abs" style="left:790px;top:1041px;width:158px;height:40px;border:1px solid #56657f;border-radius:3px;background:linear-gradient(#a9b6ca 0,#9dabc1 45%,#8f9fb8 50%,#93a3bb 100%);box-shadow:inset 0 0 0 1px rgba(255,255,255,.35)"></div>
<svg class="abs" style="left:799px;top:1043px" width="32" height="33" viewBox="0 0 32 33">
<defs><linearGradient id="xb" x1=".2" y1="0" x2=".7" y2="1"><stop offset="0" stop-color="#5ab8ff"/><stop offset="1" stop-color="#1250e8"/></linearGradient></defs>
<rect x="1" y="1" width="29.500" height="31" rx="4" fill="#f3f7fd" stroke="#cdd6e4" stroke-width=".6"/>
<path transform="translate(3.500 4.500) scale(.43) translate(-1750 -11)" d="M1750.400 18.200L1760.100 20.800C1763 19.500 1766 20 1768.500 21.500L1773.700 26.700C1782 20 1793 14 1804.200 11.100C1802 16 1800 20 1799 22.900L1791.400 34L1807.400 40.100L1784.100 45.500L1792.800 64.900C1788 60 1784 56 1778.900 52.800C1774 50 1771 48.500 1767.800 45.800C1765 43 1763 41 1762.600 38.900C1761.500 35 1762 32 1762.200 29.200C1762 27 1761 25 1760.100 23.600Z" fill="url(#xb)"/></svg>
<div class="abs" style="left:835px;top:1052px;font-size:12px;line-height:16px;color:#fff;white-space:nowrap;letter-spacing:0px">迅雷</div>
<svg class="abs" style="left:965px;top:1044px" width="32" height="32" viewBox="0 0 32 32">
<rect width="32" height="32" rx="5" fill="#2a1a12"/><rect x="1" y="1" width="30" height="30" rx="4" fill="none" stroke="#5a4a3a"/>
<text x="3" y="15" font-family="'Liberation Serif','Noto Serif CJK SC',serif" font-weight="bold" font-size="15" fill="#f4c030">傳</text>
<text x="14" y="28" font-family="'Liberation Serif','Noto Serif CJK SC',serif" font-weight="bold" font-size="15" fill="#f8d040">奇</text>
<rect x="4" y="24" width="4" height="5" fill="#3060d0"/><rect x="3" y="18" width="3" height="4" fill="#c03020"/></svg>
<div class="abs" style="left:1013px;top:1041px;width:160px;height:40px;border:1px solid #56657f;border-radius:3px;background:linear-gradient(#c3cddb 0,#b3bfd0 45%,#a3b1c6 50%,#aab8cc 100%);box-shadow:inset 0 0 0 1px rgba(255,255,255,.35)"></div>
<svg class="abs" style="left:1022px;top:1044px" width="32" height="33" viewBox="0 0 32 33">
<rect x="1" y="4" width="30" height="28" fill="#1e1e1e"/><rect x="1" y="24" width="30" height="8" fill="#d8141c"/>
<path d="M20 5c4 1 8 4 9 9l-6 8c-1-4-3-7-6-9z" fill="#8a8a8a" opacity=".6"/>
<path d="M11 1h5l10 22h-6l-2-5h-8l-3.500 6h-4.500zM13.500 8l-2 6.500h5z" fill="#f2f2f2" stroke="#b0b0b0" stroke-width=".5"/></svg>
<div class="abs" style="left:1059px;top:1052px;font-size:12px;line-height:16px;color:#fff;white-space:nowrap;letter-spacing:0.3px">AutoCAD 2013 -...</div>
<div class="abs" style="left:1176px;top:1041px;width:318px;height:40px;border:1px solid #56657f;border-radius:3px;background:linear-gradient(#a9b6ca 0,#9dabc1 45%,#8f9fb8 50%,#93a3bb 100%);box-shadow:inset 0 0 0 1px rgba(255,255,255,.35)"></div><div class="abs" style="left:1333px;top:1044px;width:1px;height:36px;background:#6e7e98"></div><div class="abs" style="left:1334px;top:1044px;width:1px;height:36px;background:rgba(255,255,255,.3)"></div>
<svg class="abs" style="left:1183px;top:1044px" width="36" height="32" viewBox="0 0 36 32">
<path d="M2 9l9-6.500 23 3-8 6.500z" fill="#b43cb0" stroke="#5c1058" stroke-width=".6"/><path d="M4 8.500l8-5 19 2.500" fill="none" stroke="#e8a0e4" stroke-width=".8"/>
<path d="M2 9l24 3v6l-24-3.500z" fill="#8c1c8c"/><path d="M26 12l8-6.500v6l-8 6.500z" fill="#c850c0"/>
<path d="M2 15l24 3.500v5.500l-24-3.500z" fill="#1430d8"/><path d="M26 18.500l8-6.500v5.500l-8 6.500z" fill="#4a6cf4"/>
<path d="M2 21l24 3.500v6l-24-4z" fill="#0c9420"/><path d="M26 24.500l8-6.500v6l-8 6.500z" fill="#34c048"/>
<path d="M2 10l6 .8v4l-6-.8zM2 16l6 .9v3.600l-6-.9zM2 22l6 .9v4l-6-1z" fill="#f4f0e8"/>
<path d="M2 15l24 3.500M2 21l24 3.500M26 18l8-6.500M26 24l8-6.500" stroke="#f4f4f4" stroke-width=".9" fill="none"/>
<path d="M2 9v17.500l24 4 8-6.500v-18.500" fill="none" stroke="#3a1a0a" stroke-width=".6"/>
<path d="M17.500 4.500l3.500 .5v25l-3.500-.6z" fill="#b87820" stroke="#5a3808" stroke-width=".5"/><rect x="16.500" y="13.500" width="5.500" height="6.500" rx="1" fill="#e4e4e4" stroke="#333" stroke-width=".7"/><path d="M19.200 15v3.500" stroke="#222" stroke-width="1.200"/></svg>
<div class="abs" style="left:1221px;top:1052px;font-size:12px;line-height:16px;color:#fff;white-space:nowrap;letter-spacing:0.25px">662613e284082...</div>
<svg class="abs" style="left:1343px;top:1044px" width="36" height="32" viewBox="0 0 36 32">
<path d="M2 9l9-6.500 23 3-8 6.500z" fill="#b43cb0" stroke="#5c1058" stroke-width=".6"/><path d="M4 8.500l8-5 19 2.500" fill="none" stroke="#e8a0e4" stroke-width=".8"/>
<path d="M2 9l24 3v6l-24-3.500z" fill="#8c1c8c"/><path d="M26 12l8-6.500v6l-8 6.500z" fill="#c850c0"/>
<path d="M2 15l24 3.500v5.500l-24-3.500z" fill="#1430d8"/><path d="M26 18.500l8-6.500v5.500l-8 6.500z" fill="#4a6cf4"/>
<path d="M2 21l24 3.500v6l-24-4z" fill="#0c9420"/><path d="M26 24.500l8-6.500v6l-8 6.500z" fill="#34c048"/>
<path d="M2 10l6 .8v4l-6-.8zM2 16l6 .9v3.600l-6-.9zM2 22l6 .9v4l-6-1z" fill="#f4f0e8"/>
<path d="M2 15l24 3.500M2 21l24 3.500M26 18l8-6.500M26 24l8-6.500" stroke="#f4f4f4" stroke-width=".9" fill="none"/>
<path d="M2 9v17.500l24 4 8-6.500v-18.500" fill="none" stroke="#3a1a0a" stroke-width=".6"/>
<path d="M17.500 4.500l3.500 .5v25l-3.500-.6z" fill="#b87820" stroke="#5a3808" stroke-width=".5"/><rect x="16.500" y="13.500" width="5.500" height="6.500" rx="1" fill="#e4e4e4" stroke="#333" stroke-width=".7"/><path d="M19.200 15v3.500" stroke="#222" stroke-width="1.200"/></svg>
<div class="abs" style="left:1381px;top:1052px;font-size:12px;line-height:16px;color:#fff;white-space:nowrap;letter-spacing:0.25px">662613e284082...</div>
<svg class="abs" style="left:1583px;top:1051px" width="17" height="16" viewBox="0 0 17 16"><path d="M8 5c0-2 3-1 3-3.500" fill="none" stroke="#b8c0cc" stroke-width=".8"/><rect x=".5" y="5.500" width="15" height="8" rx="1" fill="#9ba8bc" stroke="#c8d0dc" stroke-width=".8"/><path d="M2.500 8h11M2.500 10h11M4 12h8" stroke="#dde3ec" stroke-width=".9" stroke-dasharray="1.200 .8"/></svg>
<svg class="abs" style="left:1613px;top:1052px" width="17" height="17" viewBox="0 0 17 17"><path d="M8.500 .5l7 2c0 6-2 11-7 14-5-3-7-8-7-14z" fill="#f4f4f4" stroke="#a8a8a8" stroke-width=".6"/><path d="M8.500 2l5.500 1.600c0 5-1.600 9-5.500 11.500-3.900-2.500-5.500-6.500-5.500-11.500z" fill="#3aa828"/><path d="M9.500 4l-3.500 5h2.500l-1 4 4-5.500h-2.500z" fill="#fff"/></svg>
<svg class="abs" style="left:1637px;top:1052px" width="17" height="17" viewBox="0 0 17 17"><circle cx="8.500" cy="8.500" r="8" fill="#f0e020" stroke="#6a9a10" stroke-width=".6"/><path d="M3 12a7 7 0 0 0 11 0" fill="none" stroke="#3a9a20" stroke-width="2"/><path d="M8.500 4v8M4.500 8h8" stroke="#1a5a10" stroke-width="2.200"/></svg>
<svg class="abs" style="left:1661px;top:1052px" width="17" height="17" viewBox="0 0 17 17"><circle cx="8.500" cy="8.500" r="8" fill="#f4f4f4" stroke="#b0b0b0" stroke-width=".6"/><circle cx="8.500" cy="8.500" r="6" fill="#58b828"/><path d="M6.800 4.500h3.400v4h2.300l-4 4.500-4-4.500h2.300z" fill="#fff"/></svg>
<svg class="abs" style="left:1685px;top:1052px" width="17" height="17" viewBox="0 0 17 17"><rect width="17" height="17" rx="2" fill="#f4f7fb"/><path transform="translate(1 1.500) scale(.26) translate(-1750 -11)" d="M1750.400 18.200L1760.100 20.800C1763 19.500 1766 20 1768.500 21.500L1773.700 26.700C1782 20 1793 14 1804.200 11.100C1802 16 1800 20 1799 22.900L1791.400 34L1807.400 40.100L1784.100 45.500L1792.800 64.900C1788 60 1784 56 1778.900 52.800C1774 50 1771 48.500 1767.800 45.800C1765 43 1763 41 1762.600 38.900C1761.500 35 1762 32 1762.200 29.200C1762 27 1761 25 1760.100 23.600Z" fill="#2268e8"/></svg>
<svg class="abs" style="left:1710px;top:1051px" width="16" height="19" viewBox="0 0 16 19"><ellipse cx="8" cy="9.500" rx="7.500" ry="9" fill="#e2552a" stroke="#f0a080" stroke-width=".6"/><circle cx="8.500" cy="4" r="1.500" fill="#fff"/><path d="M8.500 6l-1 5-2 5M7.500 11l3 5M5 7l3.500 1 3-3" fill="none" stroke="#fff" stroke-width="1.300"/></svg>
<svg class="abs" style="left:1734px;top:1052px" width="16" height="17" viewBox="0 0 16 17"><path d="M8 .5l7 2c0 6-2 10.500-7 13.500-5-3-7-7.500-7-13.500z" fill="#2e9a3a" stroke="#1a6a28" stroke-width=".6"/><path d="M4 8l3 3 5-6" fill="none" stroke="#fff" stroke-width="2"/></svg>
<svg class="abs" style="left:1757px;top:1052px" width="18" height="17" viewBox="0 0 18 17"><path d="M1.500 6h3l4.500-4.500v14l-4.500-4.500h-3z" fill="#f4f4f4" stroke="#555" stroke-width=".7"/><path d="M11 5.500c1.500 1.500 1.500 4.500 0 6M13 3.500c2.500 2.500 2.500 7.500 0 10M15 2c3.300 3.500 3.300 9.500 0 13" fill="none" stroke="#f0f0f0" stroke-width="1.100"/></svg>
<svg class="abs" style="left:1780px;top:1051px" width="18" height="18" viewBox="0 0 32 32"><circle cx="16" cy="16" r="15" fill="#ea5a1a"/><path d="M6 10l4.500 11.500L16 11l5.500 10.500L26 10" fill="none" stroke="#fff" stroke-width="2.600" stroke-linejoin="round"/><circle cx="6" cy="9" r="2" fill="#fff"/><circle cx="16" cy="8" r="2" fill="#fff"/><circle cx="26" cy="9" r="2" fill="#fff"/><path d="M8 25c5 2.500 11 2.500 16 0" fill="none" stroke="#fff" stroke-width="2"/></svg>
<svg class="abs" style="left:1805px;top:1051px" width="18" height="19" viewBox="0 0 18 19"><rect x="5.500" y="4.500" width="11" height="9" fill="#dfe6f0" stroke="#222" stroke-width="1.200"/><path d="M8 17.500h6M11 14v3" stroke="#222" stroke-width="1.300"/><path d="M1.500 1v4h4v-4M3.500 5v4" fill="none" stroke="#222" stroke-width="1.200"/><rect x="2" y="8" width="3.500" height="3" fill="#f4f4f4" stroke="#222" stroke-width=".8"/></svg>
<div class="abs" style="left:1836px;top:1044px;width:64px;text-align:center;font-size:12px;line-height:16px;color:#fff;white-space:nowrap">19:17</div>
<div class="abs" style="left:1836px;top:1062px;width:64px;text-align:center;font-size:12px;line-height:16px;color:#fff;white-space:nowrap">2016/12/4</div>
<div class="abs" style="left:1906px;top:1042px;width:14px;height:38px;border-left:1px solid #5a6a84;background:linear-gradient(90deg,#a4b2c8,#8e9eb8 40%,#8092ac);box-shadow:inset 1px 0 0 rgba(255,255,255,.4)"></div>
<div class="abs" style="left:1712px;top:998px;width:104px;height:37px;border-radius:0 19px 19px 0;background:linear-gradient(#fbfbfb,#ececec);box-shadow:0 1px 4px rgba(0,0,0,.45);z-index:60"></div>
<svg class="abs" style="left:1686px;top:988px;z-index:61" width="134" height="56" viewBox="1686 988 134 56">
<defs><linearGradient id="sg" x1="0" y1="0" x2="0" y2="1"><stop offset="0" stop-color="#2aa060"/><stop offset=".3" stop-color="#168a50"/><stop offset=".31" stop-color="#38c070"/><stop offset="1" stop-color="#4ac868"/></linearGradient></defs>
<circle cx="1713.700" cy="1015.500" r="24.500" fill="#f2f2f2" stroke="#c8c8c8" stroke-width=".8"/>
<circle cx="1713.700" cy="1015.500" r="21.500" fill="url(#sg)" stroke="#1a7a48" stroke-width=".8"/>
<ellipse cx="1713.700" cy="999" rx="7" ry="2.500" fill="#fff" opacity=".45"/>
<text x="1713.700" y="1020.500" text-anchor="middle" font-family="'Liberation Sans',sans-serif" font-size="14" fill="#fff">69%</text>
<path d="M1745 1013v-6M1742.500 1009.500l2.500-3 2.500 3" fill="none" stroke="#e04a38" stroke-width="1.600"/>
<path d="M1745 1020v6M1742.500 1023.500l2.500 3 2.500-3" fill="none" stroke="#2aa040" stroke-width="1.600"/>
<text x="1787" y="1013" text-anchor="end" font-family="'Liberation Sans',sans-serif" font-size="9.500" fill="#222">0K/s</text>
<text x="1787" y="1028" text-anchor="end" font-family="'Liberation Sans',sans-serif" font-size="9.500" fill="#222">0K/s</text>
<circle cx="1801" cy="1017" r="8.500" fill="#3a86e0" stroke="#2a6ac0" stroke-width=".6"/><path d="M1801 1012.500v9M1796.500 1017h9" stroke="#fff" stroke-width="1.800"/>
<circle cx="1807.500" cy="1011" r="3.800" fill="#e8323c"/>
</svg></body></html>
